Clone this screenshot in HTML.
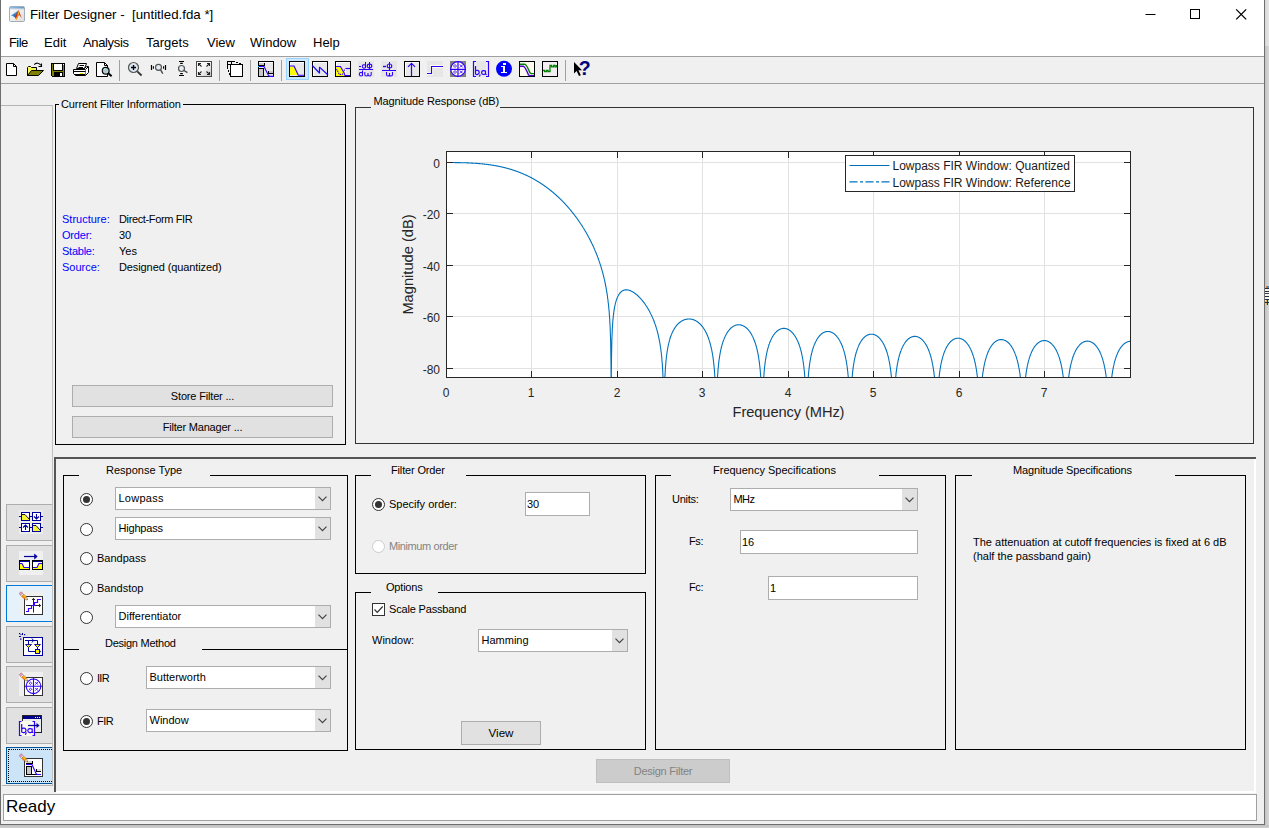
<!DOCTYPE html>
<html lang="en"><head><meta charset="utf-8"><title>Filter Designer</title>
<style>
html,body{margin:0;padding:0;}
body{width:1269px;height:828px;overflow:hidden;background:#f0f0f0;position:relative;
  font-family:"Liberation Sans",sans-serif;font-size:11px;color:#000;}
*{box-sizing:border-box;}
.abs,.a{position:absolute;}
.t{position:absolute;white-space:nowrap;line-height:13px;height:13px;}
.line{position:absolute;background:#000;}
#titlebar{position:absolute;left:1px;top:0;width:1263px;height:29px;background:#fff;}
#menubar{position:absolute;left:1px;top:29px;width:1263px;height:27px;background:#fff;}
.seg{font-family:"Liberation Sans",sans-serif;font-size:12px;position:absolute;white-space:nowrap;line-height:16px;}
.menu{font-family:"Liberation Sans",sans-serif;font-size:13px;position:absolute;white-space:nowrap;line-height:16px;top:35px;}
.grp{position:absolute;border:1px solid #000;}
.gt{position:absolute;background:#f0f0f0;white-space:nowrap;line-height:13px;height:13px;text-align:center;}
.combo{position:absolute;height:23px;background:#fff;border:1px solid #adadad;}
.combo span{position:absolute;left:2.5px;top:4px;line-height:13px;white-space:nowrap;}
.combo i{position:absolute;right:0;top:0;width:15px;height:21px;background:#e1e1e1;}
.combo i svg{position:absolute;left:2.5px;top:8px;}
.edit{position:absolute;height:24px;background:#fff;border:1px solid #adadad;}
.edit span{position:absolute;left:1px;top:5px;line-height:13px;}
.radio{position:absolute;width:13px;height:13px;border-radius:50%;border:1px solid #333;background:#fff;}
.radio.on::after{content:"";position:absolute;left:2px;top:2px;width:7px;height:7px;border-radius:50%;background:#333;}
.radio.dis{border-color:#ccc;}
.btn{position:absolute;background:#e1e1e1;border:1px solid #adadad;text-align:center;white-space:nowrap;}
.sb{position:absolute;left:6px;width:46px;height:37px;background:#e1e1e1;border:1px solid #c8c8c8;border-right:none;}
.sb svg{position:absolute;left:13px;top:6px;}
.tb{position:absolute;top:61px;width:16px;height:16px;}
.tsep{position:absolute;top:61px;width:1px;height:19px;background:#a0a0a0;}
svg text{font-family:"Liberation Sans",sans-serif;}

</style></head>
<body>
<!-- window chrome -->
<div class="a" style="left:0;top:0;width:1px;height:825px;background:#6e6e6e"></div>
<div class="a" style="left:1264px;top:0;width:1px;height:825px;background:#6e6e6e"></div>
<div class="a" style="left:0;top:824px;width:1265px;height:1px;background:#6e6e6e"></div>
<div class="a" style="left:1265px;top:0;width:4px;height:46px;background:linear-gradient(90deg,#d8d8d8,#e4e4e4)"></div>
<div class="a" style="left:1265px;top:46px;width:4px;height:782px;background:linear-gradient(90deg,#c4c4c4,#d6d6d6)"></div>
<div class="a" style="left:0;top:825px;width:1269px;height:3px;background:linear-gradient(180deg,#c0c0c0,#d0d0d0)"></div>
<svg class="a" style="left:1265px;top:285px" width="4" height="21" viewBox="0 0 4 21" shape-rendering="crispEdges">
  <rect x="0" y="3" width="4" height="13" fill="#f4f4f4"/>
  <rect x="0" y="3" width="4" height="1" fill="#2b2b3b"/><rect x="0" y="6" width="4" height="1" fill="#2b2b3b"/><rect x="0" y="8" width="4" height="1" fill="#3b3b4b"/>
  <rect x="0" y="11" width="4" height="1" fill="#2b2b3b"/><rect x="0" y="14" width="4" height="1" fill="#2b2b3b"/><rect x="0" y="17" width="4" height="1" fill="#2b2b3b"/>
  <rect x="1" y="1" width="1" height="2" fill="#c87840"/><rect x="2" y="1" width="2" height="2" fill="#3a8fd0"/>
  <rect x="1" y="15" width="1" height="2" fill="#e8b060"/><rect x="2" y="15" width="1" height="2" fill="#303080"/><rect x="3" y="15" width="1" height="2" fill="#a0e8e0"/>
  <rect x="1" y="18" width="1" height="2" fill="#e8b060"/><rect x="2" y="18" width="1" height="2" fill="#303080"/><rect x="3" y="18" width="1" height="2" fill="#a0e8e0"/>
</svg>
<div id="titlebar"></div>
<div id="menubar"></div>
<!--TITLE-->
<svg class="a" style="left:9px;top:6px" width="16" height="16" viewBox="9 6 16 16">
  <defs><linearGradient id="icb" x1="0" y1="0" x2="1" y2="1"><stop offset="0" stop-color="#fff"/><stop offset="1" stop-color="#dcdcdc"/></linearGradient>
  <linearGradient id="icw" x1="0" y1="0" x2="1" y2="0"><stop offset="0" stop-color="#8cc0ea"/><stop offset="1" stop-color="#5c9ad2"/></linearGradient></defs>
  <rect x="9.5" y="6.5" width="15" height="15" rx="1" fill="url(#icb)" stroke="#a4acb6"/>
  <rect x="10" y="7" width="14" height="1.6" fill="url(#icw)"/>
  <rect x="10" y="8.6" width="14" height="0.7" fill="#b9c4cf"/>
  <path d="M11 15.5 L16.9 11.6 L17.4 13 L15.2 17.6 L13.7 16.6 Z" fill="#4a8fd0"/>
  <path d="M13.7 16.6 L15.2 17.6 L16.2 15 L14 14 Z" fill="#2f6fb4"/>
  <path d="M15 17.4 L17.2 12 L18.3 10 L18.6 14 L16.4 19.7 Z" fill="#a82a1c"/>
  <path d="M18.3 10 C18.9 12 19 14 19.3 15.3 C18.4 15.8 17.6 17.5 16.9 19.2 L16.2 19.8 L15.7 18.9 C17 16 17.7 13 18.3 10 Z" fill="#f0841e"/>
  <path d="M18.3 10.2 L18.8 13.2 L18 14.6 Z" fill="#ffd020"/>
  <path d="M16.2 19.8 L15.6 18.8 L16.3 17.6 L16.9 19.2 Z" fill="#ffc020"/>
  <path d="M18.3 10 C19.4 11 20.3 15 21.9 17.9 C20.8 17.2 20 16 19.3 15.3 C19 13.5 18.9 12 18.3 10 Z" fill="#c8402c"/>
</svg>
<div class="seg" style="left:30px;top:7px;font-size:13.3px" id="ttl">Filter Designer -&nbsp; [untitled.fda *]</div>
<svg class="a" style="left:1140px;top:0" width="124" height="29" viewBox="0 0 124 29">
  <path d="M5.5 14.5 H15.5" stroke="#000" stroke-width="1" fill="none"/>
  <rect x="50.5" y="9.5" width="9" height="9" stroke="#000" stroke-width="1" fill="none"/>
  <path d="M96.2 9.4 L106.2 19.4 M106.2 9.4 L96.2 19.4" stroke="#000" stroke-width="1.3" fill="none"/>
</svg>
<!--MENU-->
<div class="menu" style="left:9px;letter-spacing:-0.6px">File</div>
<div class="menu" style="left:44px">Edit</div>
<div class="menu" style="left:83px;letter-spacing:-0.35px">Analysis</div>
<div class="menu" style="left:146px">Targets</div>
<div class="menu" style="left:207px">View</div>
<div class="menu" style="left:250px">Window</div>
<div class="menu" style="left:313px">Help</div>
<div class="a" style="left:1px;top:56px;width:1263px;height:1px;background:#a0a0a0"></div>
<div class="a" style="left:1px;top:83px;width:1263px;height:1px;background:#a0a0a0"></div>
<!--TOOLBAR-->
<div class="a" style="left:286px;top:58px;width:23px;height:22px;background:#cce8ff;border:1px solid #99d1ff"></div>
<svg class="a" style="left:0;top:57px" width="600" height="26" viewBox="0 57 600 26">
<g shape-rendering="crispEdges" fill="#a0a0a0">
  <rect x="119" y="60" width="1" height="21"/><rect x="219" y="60" width="1" height="21"/>
  <rect x="250" y="60" width="1" height="21"/><rect x="281" y="60" width="1" height="21"/>
  <rect x="565" y="60" width="1" height="21"/>
</g>
<!-- new -->
<path d="M6.5 63.5 H13.5 L16.5 66.5 V75.5 H6.5 Z" fill="#fff" stroke="#000"/>
<path d="M13.5 63.5 V66.5 H16.5" fill="none" stroke="#000"/>
<!-- open -->
<g>
  <path d="M27.5 75.5 V67.5 L28.5 66.5 H30.5 L31.5 67.5 H36.5 V70.5" fill="#ffff80" stroke="#000"/>
  <path d="M28 68 H36 V70.5 H31 L28 74.5 Z" fill="#f6f650" stroke="none"/>
  <path d="M27.5 75.5 L31.5 70.5 H43.5 L38.5 75.5 Z" fill="#808000" stroke="#000" stroke-linejoin="miter"/>
  <path d="M34.3 64.6 C35.8 62.7 39.3 62.6 40.8 65.3" fill="none" stroke="#000" stroke-width="1.2"/>
  <path d="M38.5 66.5 H41.5 V63.5" fill="none" stroke="#000" stroke-width="1.1"/>
</g>
<!-- save -->
<g shape-rendering="crispEdges">
  <rect x="51" y="63" width="14" height="14" fill="#000"/>
  <rect x="52" y="64" width="12" height="12" fill="#808000"/>
  <rect x="54" y="64" width="8" height="6" fill="#fff"/>
  <rect x="54" y="63" width="8" height="1" fill="#000"/>
  <rect x="53" y="64" width="1" height="7" fill="#000"/><rect x="62" y="64" width="1" height="7" fill="#000"/>
  <rect x="54" y="70" width="8" height="1" fill="#000"/>
  <rect x="54" y="72" width="9" height="5" fill="#000"/>
  <rect x="60" y="73" width="2" height="3" fill="#fff"/>
  <rect x="63" y="64" width="1" height="1" fill="#fff"/>
  <rect x="51" y="76" width="1" height="1" fill="#f0f0f0"/>
</g>
<!-- print -->
<g fill="none" stroke="#000">
  <path d="M76.5 68.5 L78.5 63.5 H86.5 L84.5 68.5 Z" fill="#fff"/>
  <path d="M79.5 65.5 H84 M78.5 67.5 H83"/>
  <path d="M73.5 69.5 H85.5 V75.5 H75.5 L73.5 73.5 Z" fill="#fff"/>
  <path d="M85.5 69.5 L88.5 66.5 V72.5 L85.5 75.5" fill="#fff"/>
  <path d="M84.5 68.5 L86.5 66.5 H88"/>
  <path d="M73.5 71.5 H85.5 M74.5 74.5 H85"/>
  <path d="M80 73.5 H83" stroke="#e8e800"/>
</g>
<!-- preview -->
<g>
  <path d="M96.5 62.5 H104.5 L107.5 65.5 V76.5 H96.5 Z" fill="#fff" stroke="#000"/>
  <path d="M104.5 62.5 V65.5 H107.5" fill="none" stroke="#000"/>
  <circle cx="105.7" cy="70.7" r="3.4" fill="#b9c4c8" stroke="#000" stroke-width="1.2"/>
  <path d="M104 69.2 L105.2 68.4 M106.6 72.6 L107.6 71.6" stroke="#7fffff" stroke-width="1.2"/>
  <path d="M108.3 73.3 L111.6 76.3" stroke="#000" stroke-width="2"/>
</g>
<!-- zoom in -->
<g>
  <circle cx="133.5" cy="67.5" r="5" fill="#dbe6f1" stroke="#555" stroke-width="1.2"/>
  <path d="M131 67.5 H136 M133.5 65 V70" stroke="#000" stroke-width="1.3"/>
  <path d="M137.2 71.3 L141.6 75.5" stroke="#333" stroke-width="1.8"/>
</g>
<!-- zoom x -->
<g>
  <path d="M151.5 65 V70 M165.5 65 V70" stroke="#000" stroke-width="1.2"/>
  <path d="M153.4 66.2 V68.8 M163.6 66.2 V68.8" stroke="#000" stroke-width="1.1"/>
  <circle cx="158.5" cy="67.3" r="3" fill="#e3ebf3" stroke="#555" stroke-width="1.2"/>
  <path d="M160.6 69.8 L162.8 73.6" stroke="#444" stroke-width="1.3"/>
</g>
<!-- zoom y -->
<g>
  <path d="M179 61.5 H184 M179 75.5 H184" stroke="#000" stroke-width="1.2"/>
  <path d="M180.2 63.4 H182.8 M180.2 73.6 H182.8" stroke="#000" stroke-width="1.1"/>
  <circle cx="181.5" cy="68.5" r="3" fill="#e3ebf3" stroke="#555" stroke-width="1.2"/>
  <path d="M184 70.5 L187.4 72.6" stroke="#444" stroke-width="1.3"/>
</g>
<!-- full view -->
<g>
  <defs><linearGradient id="fvg" x1="0" y1="0" x2="1" y2="1"><stop offset="0" stop-color="#fff"/><stop offset="0.5" stop-color="#f4f4f4"/><stop offset="1" stop-color="#c4c4c4"/></linearGradient></defs>
  <rect x="196.5" y="61.5" width="15" height="15" fill="url(#fvg)" stroke="#4a4a4a"/>
  <g stroke="#222" stroke-width="1.1" fill="none">
    <path d="M198.5 66 V63.5 H201 M198.8 63.8 L201.5 66.5"/>
    <path d="M207 63.5 H209.5 V66 M209.2 63.8 L206.5 66.5"/>
    <path d="M198.5 72 V74.5 H201 M198.8 74.2 L201.5 71.5"/>
    <path d="M207 74.5 H209.5 V72 M209.2 74.2 L206.5 71.5"/>
  </g>
</g>
<!-- undock -->
<g shape-rendering="crispEdges">
  <rect x="227" y="61" width="8" height="1" fill="#000"/><rect x="227" y="61" width="1" height="8" fill="#000"/>
  <rect x="227" y="64" width="4" height="1" fill="#000"/><rect x="231" y="61" width="1" height="4" fill="#000"/>
  <rect x="236" y="62" width="2" height="1" fill="#000"/><rect x="239" y="63" width="2" height="1" fill="#000"/>
  <rect x="228" y="70" width="1" height="2" fill="#000"/><rect x="229" y="73" width="1" height="2" fill="#000"/>
  <rect x="230" y="64" width="13" height="13" fill="#000"/><rect x="231" y="65" width="11" height="11" fill="#fff"/>
</g>
<!-- spec icon -->
<g shape-rendering="crispEdges">
  <rect x="258" y="61" width="16" height="16" fill="#000"/><rect x="259" y="62" width="14" height="14" fill="#fff"/>
  <rect x="260" y="63" width="13" height="13" fill="#e8e8e8"/>
  <rect x="259" y="63" width="5" height="2" fill="#c8c8c8"/><rect x="264" y="63" width="1" height="3" fill="#000"/><rect x="259" y="65" width="6" height="1" fill="#000"/>
  <rect x="259" y="68" width="5" height="1" fill="#000"/><rect x="263" y="68" width="1" height="8" fill="#000"/><rect x="259" y="69" width="4" height="7" fill="#c8c8c8"/>
  <rect x="268" y="71" width="1" height="3" fill="#000"/><rect x="268" y="73" width="5" height="1" fill="#000"/><rect x="269" y="71" width="4" height="2" fill="#c8c8c8"/>
  <rect x="258" y="66" width="1" height="1" fill="#00c0ff"/>
</g>
<path d="M259 66.5 H264 L268.5 75.5 L269.5 76.3 H274" fill="none" stroke="#3000ff" stroke-width="1.15"/>
<!-- magnitude icon (selected) -->
<g shape-rendering="crispEdges">
  <rect x="289" y="61" width="16" height="16" fill="#000"/><rect x="290" y="62" width="14" height="14" fill="#fff"/>
  <rect x="291" y="63" width="13" height="13" fill="#e8e8e8"/>
</g>
<path d="M290 66.5 H294 L298 75 H290 Z" fill="#ffff00"/>
<path d="M290 66 H294 L298.3 75.2 H304" fill="none" stroke="#3000ff" stroke-width="1.15"/>
<!-- phase icon -->
<g shape-rendering="crispEdges">
  <rect x="312" y="61" width="16" height="16" fill="#000"/><rect x="313" y="62" width="14" height="14" fill="#fff"/>
  <rect x="314" y="63" width="13" height="13" fill="#e8e8e8"/>
</g>
<path d="M312.3 65.5 L319.5 73 V67.2 L328 75" fill="none" stroke="#1a00ff" stroke-width="1.15" stroke-linejoin="round"/>
<!-- mag+phase icon -->
<g shape-rendering="crispEdges">
  <rect x="335" y="61" width="16" height="16" fill="#000"/><rect x="336" y="62" width="14" height="14" fill="#fff"/>
  <rect x="337" y="63" width="13" height="13" fill="#e8e8e8"/>
</g>
<path d="M336 67 H340.3 L343.6 72.8 L344.4 76 H336 Z" fill="#ffff00"/>
<path d="M336 66.5 H340.4 L343.9 72.4 L345 75.5 H350" fill="none" stroke="#3000ff" stroke-width="1.15"/>
<path d="M336.5 69 L338.7 73.2 L339.8 74.4 H342.2 L343.4 72.8" fill="none" stroke="#3000ff" stroke-width="1.1" stroke-dasharray="1.3 0.8"/>
<path d="M345.4 68.5 H350" fill="none" stroke="#3000ff" stroke-width="1.15"/>
<rect x="344" y="69.5" width="1" height="1.2" fill="#3000ff"/>
<rect x="345" y="69.3" width="1" height="5" fill="#fff"/>
<!-- group delay -->
<rect x="358" y="61" width="16" height="16" fill="#e6e6e6" shape-rendering="crispEdges"/>
<g fill="none" stroke="#3000ff" stroke-width="1.05">
  <path d="M359 66.5 H361"/>
  <path d="M365.5 62 V68 M365.5 65.3 C364 64 362.3 65 362.3 66.5 C362.3 68 364 68.8 365.5 67.5"/>
  <path d="M369.5 62 V69"/><ellipse cx="369.5" cy="66" rx="2.3" ry="1.9"/>
  <path d="M359 69.5 H373"/>
  <path d="M362.5 70.5 V76 M362.5 73 C361 71.8 359.3 72.6 359.3 74.2 C359.3 75.8 361 76.5 362.5 75.3"/>
  <path d="M364.8 72 V74.5 C364.8 76.5 368 76.5 368 74.5 V73 M368 74.5 C368 76.5 371.2 76.5 371.2 74.5 V72"/>
</g>
<!-- phase delay -->
<rect x="381" y="61" width="16" height="16" fill="#e6e6e6" shape-rendering="crispEdges"/>
<g fill="none" stroke="#3000ff" stroke-width="1.05">
  <path d="M383 66.5 H386" stroke-width="1.4"/>
  <path d="M389.5 62 V70"/><ellipse cx="389.5" cy="66" rx="2.3" ry="2"/>
  <path d="M382 70.5 H396"/>
  <path d="M386.5 72 V74.5 C386.5 76.5 389.5 76.5 389.5 74.5 V73 M389.5 74.5 C389.5 76.5 392.5 76.5 392.5 74.5 V72"/>
</g>
<!-- impulse -->
<g shape-rendering="crispEdges">
  <rect x="404" y="61" width="16" height="16" fill="#000"/><rect x="405" y="62" width="14" height="14" fill="#fff"/>
  <rect x="406" y="63" width="13" height="13" fill="#e8e8e8"/>
</g>
<path d="M411.5 76 V63.5 M408 66.8 L411.5 63.3 L415 66.8" fill="none" stroke="#3000ff" stroke-width="1.2"/>
<!-- step -->
<rect x="427" y="61" width="16" height="16" fill="#e6e6e6" shape-rendering="crispEdges"/>
<path d="M427 73.5 H431.5 V66.5 H443" fill="none" stroke="#fffff0" stroke-width="3"/>
<path d="M427 73.5 H431.5 V66.5 H443" fill="none" stroke="#3000ff" stroke-width="1.2"/>
<!-- pole zero -->
<rect x="450" y="61" width="16" height="16" fill="#808080" shape-rendering="crispEdges"/>
<circle cx="458" cy="69" r="7.3" fill="#ffffe6" stroke="#3000ff" stroke-width="1.2"/>
<path d="M458 61 V77 M450 69.3 H466" stroke="#3000ff" stroke-width="1.2"/>
<g fill="none" stroke="#3000ff" stroke-width="0.9">
  <path d="M455 64.5 L456.5 66 L455 67.5 L453.5 66 Z M455 70.5 L456.5 72 L455 73.5 L453.5 72 Z"/>
  <path d="M459.8 64.5 L462.8 67.5 M462.8 64.5 L459.8 67.5 M459.8 70.5 L462.8 73.5 M462.8 70.5 L459.8 73.5"/>
</g>
<!-- [b,a] -->
<rect x="476" y="61" width="10" height="16" fill="#e6e6e6" shape-rendering="crispEdges"/>
<g fill="none" stroke="#3000ff" stroke-width="1.2">
  <path d="M476 61.5 H473.5 V76.5 H476 M486 61.5 H488.5 V76.5 H486"/>
  <path d="M475.5 66 V74.5 M475.5 71 C476.5 69.8 479.2 70 479.2 72.3 C479.2 74.8 476.5 75 475.5 73.8"/>
  <path d="M480.3 74.5 L479.3 76.5"/>
  <path d="M485.5 70.5 V74.7 M485.5 71.5 C484.3 70 481.6 70.3 481.6 72.5 C481.6 74.8 484.3 75 485.5 73.6 L486.5 75"/>
</g>
<!-- info -->
<circle cx="504" cy="68.8" r="8" fill="#0000ff"/>
<g shape-rendering="crispEdges" fill="#fff">
  <rect x="503" y="63" width="3" height="2"/><rect x="501" y="66" width="4" height="1"/><rect x="503" y="66" width="2" height="7"/><rect x="501" y="72" width="6" height="1"/>
</g>
<!-- mag est -->
<g shape-rendering="crispEdges">
  <rect x="519" y="61" width="16" height="16" fill="#000"/><rect x="520" y="62" width="14" height="14" fill="#fffbf0"/>
</g>
<path d="M520 66.3 H523.5 C525.5 67 526.5 71 528.5 74.8 L529.5 75.6 H534" fill="none" stroke="#4400cc" stroke-width="1.4"/>
<path d="M520 64.3 H525 C527 65 528 69 530 72.8 L531 73.6 H534" fill="none" stroke="#008000" stroke-width="1.4"/>
<!-- roundoff noise -->
<g shape-rendering="crispEdges">
  <rect x="542" y="61" width="16" height="16" fill="#000"/><rect x="543" y="62" width="14" height="14" fill="#f4eef4"/>
</g>
<path d="M543 70.3 H544.5 V71.5 H546.5 V70.3 H548 V71.5 H550 V65.3 H551.5 V66.8 H553.5 V65.3 H555 V66.8 H556.5 V65" fill="none" stroke="#008000" stroke-width="1.3"/>
<!-- help -->
<path d="M574 62 V73.5 L576.6 71 L579 76 L580.8 75.2 L578.5 70.3 H582 Z" fill="#000"/>
<text x="578.8" y="75.3" font-size="19.5" font-weight="bold" fill="#000080" style="font-family:'Liberation Sans',sans-serif">?</text>
</svg>

<!--SIDEBAR-->
<div class="a" style="left:1px;top:105px;width:52px;height:1px;background:#b4b4b4"></div>
<div class="a" style="left:52px;top:105px;width:1px;height:681px;background:#c0c0c0"></div>
<div class="a" style="left:2px;top:785px;width:51px;height:1px;background:#b4b4b4"></div>
<div class="a" style="left:6px;top:504px;width:46px;height:37px;background:#e1e1e1;border:1px solid #adadad;border-right:none"></div>
<div class="a" style="left:6px;top:545px;width:46px;height:37px;background:#e1e1e1;border:1px solid #adadad;border-right:none"></div>
<div class="a" style="left:6px;top:585px;width:46px;height:37px;background:#e5f1fb;border:1px solid #0078d7;border-right:none"></div>
<div class="a" style="left:6px;top:626px;width:46px;height:37px;background:#e1e1e1;border:1px solid #adadad;border-right:none"></div>
<div class="a" style="left:6px;top:666px;width:46px;height:37px;background:#e1e1e1;border:1px solid #adadad;border-right:none"></div>
<div class="a" style="left:6px;top:707px;width:46px;height:37px;background:#e1e1e1;border:1px solid #adadad;border-right:none"></div>
<div class="a" style="left:6px;top:747px;width:46px;height:37px;background:#cce4f7;border:1px solid #005499;border-right:none"></div>
<div class="a" style="left:8px;top:749px;width:44px;height:33px;border:1px dotted #000;border-right:none"></div>
<svg class="a" style="left:0;top:500px" width="53" height="290" viewBox="0 500 53 290">
<defs><linearGradient id="pg" x1="0" y1="0" x2="0" y2="1"><stop offset="0" stop-color="#ffe060"/><stop offset="0.45" stop-color="#ffb000"/><stop offset="1" stop-color="#f07800"/></linearGradient></defs>
<rect x="19" y="510" width="24" height="24" fill="#ececec" shape-rendering="crispEdges"/>
<g shape-rendering="crispEdges"><rect x="21" y="512" width="9" height="9" fill="#0000a0"/><rect x="22" y="513" width="7" height="7" fill="#fff"/></g>
<path d="M22 515 H25 L29 519 V520 H22 Z" fill="#f6f630"/>
<path d="M22 514.5 H25 L29 519" fill="none" stroke="#000" stroke-width="0.9"/>
<g shape-rendering="crispEdges"><rect x="32" y="512" width="9" height="9" fill="#0000a0"/><rect x="33" y="513" width="7" height="7" fill="#fff"/></g>
<path d="M36.5 514 V519 M34 516.5 L36.5 519.0 L39 516.5" fill="none" stroke="#0000a0" stroke-width="1.1"/>
<g shape-rendering="crispEdges"><rect x="21" y="523" width="9" height="9" fill="#0000a0"/><rect x="22" y="524" width="7" height="7" fill="#fff"/></g>
<path d="M25.5 530 V525 M23 527.5 L25.5 525.0 L28 527.5" fill="none" stroke="#0000a0" stroke-width="1.1"/>
<g shape-rendering="crispEdges"><rect x="32" y="523" width="9" height="9" fill="#0000a0"/><rect x="33" y="524" width="7" height="7" fill="#fff"/></g>
<path d="M33 526 H36 L40 530 V531 H33 Z" fill="#f6f630"/>
<path d="M33 525.5 H36 L40 530" fill="none" stroke="#000" stroke-width="0.9"/>
<g shape-rendering="crispEdges" fill="#0000a0"><rect x="19" y="516" width="2" height="1"/><rect x="30" y="516" width="2" height="1"/><rect x="41" y="516" width="2" height="1"/><rect x="19" y="527" width="2" height="1"/><rect x="30" y="527" width="2" height="1"/><rect x="41" y="527" width="2" height="1"/></g>
<rect x="19" y="551" width="24" height="24" fill="#f0f0f0" shape-rendering="crispEdges"/>
<path d="M24 556.5 H36" stroke="#0000a0" stroke-width="1.2"/><path d="M34.5 554 L37.3 556.5 L34.5 559 Z" fill="#0000a0" stroke="#0000a0" stroke-width="0.6"/>
<g shape-rendering="crispEdges"><rect x="19" y="560" width="11" height="10" fill="#000"/><rect x="20" y="561" width="9" height="8" fill="#fff"/><rect x="20" y="561" width="9" height="1" fill="#0000a0"/></g>
<path d="M20 563.5 H22 L24 567.5 H29 V569 H20 Z" fill="#ffff00"/>
<path d="M20 563.5 H22 L24 567.5 H29" fill="none" stroke="#3000ff" stroke-width="1.1"/>
<g shape-rendering="crispEdges"><rect x="32" y="560" width="11" height="10" fill="#000"/><rect x="33" y="561" width="9" height="8" fill="#fff"/><rect x="33" y="561" width="9" height="1" fill="#0000a0"/></g>
<path d="M33 567.5 H37 L39 563.5 H42 V569 H33 Z" fill="#ffff00"/>
<path d="M33 567.5 H37 L39 563.5 H42" fill="none" stroke="#3000ff" stroke-width="1.1"/>
<rect x="19" y="591" width="24" height="24" fill="#f0f0f0" shape-rendering="crispEdges"/>
<rect x="24.5" y="596.5" width="18" height="18" fill="#fff" stroke="#333"/>
<path d="M33.5 612.5 V598.5 M26 605.5 H40.5" stroke="#222" stroke-width="1" fill="none"/>
<path d="M32 600 L33.5 598.3 L35 600 M39 604 L40.7 605.5 L39 607" stroke="#222" stroke-width="1" fill="none"/>
<path d="M26 611.5 H28.5 V608.5 H31.5 V605.5 H34.5 V602.5 H37.5 V599.5 H41" stroke="#4400ff" stroke-width="1.2" fill="none"/>
<g transform="translate(20.3,592.8) rotate(45)"><rect x="-0.3" y="-1.5" width="2.5" height="3" rx="1" fill="#eaa0c4" stroke="#a84868" stroke-width="0.5"/><rect x="2.1" y="-1.5" width="1.4" height="3" fill="#ececec" stroke="#8a8a8a" stroke-width="0.4"/><rect x="3.5" y="-1.5" width="3.8" height="3" fill="url(#pg)" stroke="#b84800" stroke-width="0.45"/><path d="M7.3 -1.5 L9.4 -0.9 L10 0 L9.4 0.9 L7.3 1.5 Z" fill="#f8d4a8" stroke="#8a5a30" stroke-width="0.4"/><path d="M9.2 -0.6 L10.3 0 L9.2 0.6 Z" fill="#222"/></g>
<g fill="#0000a0"><rect x="19" y="633" width="1.2" height="1.2"/><rect x="22" y="633" width="1" height="2"/><rect x="24" y="634" width="1.2" height="1.2"/><rect x="19" y="636" width="2" height="1"/><rect x="20" y="638.5" width="1.5" height="1.2"/><rect x="20.5" y="634" width="1" height="1"/></g>
<rect x="23.5" y="637.5" width="19" height="18" fill="#fff" stroke="#0000a0" stroke-width="1"/>
<g fill="none" stroke="#0000a0" stroke-width="1"><path d="M25 640.5 H37.5 V644 M28.5 640.5 V651.5 H35 M32 638.5 L33.5 640.5 L32 642.5 M37.5 646 V649"/></g>
<path d="M25.5 644.5 H31.5 L28.5 647.5 Z M34.5 644.5 H40.5 L37.5 647.5 Z" fill="#ffee00" stroke="#0000a0" stroke-width="0.9"/>
<rect x="35.5" y="649.5" width="4" height="4" fill="#ffee00" stroke="#0000a0"/><path d="M39.5 650 L41 651.5 L39.5 653" fill="#0000a0"/>
<rect x="19" y="672" width="24" height="24" fill="#f0f0f0" shape-rendering="crispEdges"/>
<rect x="24.5" y="677.5" width="18" height="18" fill="#fff" stroke="#333"/>
<circle cx="33.5" cy="686.3" r="7.3" fill="none" stroke="#3000ff" stroke-width="1.1"/>
<path d="M33.5 678 V695 M25 686.3 H42" stroke="#3000ff" stroke-width="1.1"/>
<g fill="none" stroke="#3000ff" stroke-width="0.9"><path d="M30.5 682 L31.8 683.3 L30.5 684.6 L29.2 683.3 Z M30.5 688 L31.8 689.3 L30.5 690.6 L29.2 689.3 Z"/><path d="M35.3 682 L37.9 684.6 M37.9 682 L35.3 684.6 M35.3 688 L37.9 690.6 M37.9 688 L35.3 690.6"/></g>
<g transform="translate(20.3,673.8) rotate(45)"><rect x="-0.3" y="-1.5" width="2.5" height="3" rx="1" fill="#eaa0c4" stroke="#a84868" stroke-width="0.5"/><rect x="2.1" y="-1.5" width="1.4" height="3" fill="#ececec" stroke="#8a8a8a" stroke-width="0.4"/><rect x="3.5" y="-1.5" width="3.8" height="3" fill="url(#pg)" stroke="#b84800" stroke-width="0.45"/><path d="M7.3 -1.5 L9.4 -0.9 L10 0 L9.4 0.9 L7.3 1.5 Z" fill="#f8d4a8" stroke="#8a5a30" stroke-width="0.4"/><path d="M9.2 -0.6 L10.3 0 L9.2 0.6 Z" fill="#222"/></g>
<rect x="22.5" y="715.5" width="19" height="17" fill="#ececec" stroke="#222"/>
<rect x="23" y="716" width="18" height="3" fill="#00008b" shape-rendering="crispEdges"/>
<g fill="#fff" shape-rendering="crispEdges"><rect x="35" y="717" width="1" height="1"/><rect x="37" y="717" width="1" height="1"/><rect x="39" y="717" width="1" height="1"/></g>
<rect x="20" y="721" width="14" height="15" fill="#fbfbea"/>
<g fill="none" stroke="#3000ff" stroke-width="1.2"><path d="M21.5 721.5 H19.5 V735.5 H21.5 M32.5 721.5 H34.5 V735.5 H32.5"/><path d="M21.7 724 V732.5 M21.7 729 C23 727.6 26 727.8 26 730.3 C26 733 23 733.2 21.7 731.8"/><path d="M26.5 732.5 L25.3 734.8"/><path d="M32.2 728.5 V732.7 M32.2 729.5 C31 728 27.8 728.3 27.8 730.5 C27.8 733 31 733.2 32.2 731.6 L33 733"/></g>
<path d="M28 725.5 H37" stroke="#0000a0" stroke-width="1.2"/><path d="M36.5 723 L39.6 725.5 L36.5 728 Z" fill="#0000a0"/>
<rect x="24.5" y="758.5" width="18" height="18" fill="#fff" stroke="#333"/>
<g shape-rendering="crispEdges"><rect x="27" y="761" width="5" height="2" fill="#d0d0d0"/><rect x="32" y="761" width="1" height="3" fill="#000"/><rect x="26" y="763" width="7" height="1" fill="#000"/><rect x="26" y="766" width="6" height="1" fill="#000"/><rect x="26" y="766" width="1" height="9" fill="#000"/><rect x="27" y="767" width="4" height="7" fill="#c8c8c8"/><rect x="31" y="766" width="1" height="9" fill="#000"/><rect x="26" y="774" width="11" height="1" fill="#000"/><rect x="36" y="769" width="1" height="3" fill="#000"/><rect x="36" y="771" width="5" height="1" fill="#000"/><rect x="37" y="769" width="4" height="2" fill="#d8d8d8"/></g>
<path d="M26 764.5 H32 L36 773.5 L37 774.5 H41" fill="none" stroke="#3000ff" stroke-width="1.2"/>
<g transform="translate(20.3,754.8) rotate(45)"><rect x="-0.3" y="-1.5" width="2.5" height="3" rx="1" fill="#eaa0c4" stroke="#a84868" stroke-width="0.5"/><rect x="2.1" y="-1.5" width="1.4" height="3" fill="#ececec" stroke="#8a8a8a" stroke-width="0.4"/><rect x="3.5" y="-1.5" width="3.8" height="3" fill="url(#pg)" stroke="#b84800" stroke-width="0.45"/><path d="M7.3 -1.5 L9.4 -0.9 L10 0 L9.4 0.9 L7.3 1.5 Z" fill="#f8d4a8" stroke="#8a5a30" stroke-width="0.4"/><path d="M9.2 -0.6 L10.3 0 L9.2 0.6 Z" fill="#222"/></g>
</svg>
<!--PANELS-->
<!-- Current Filter Information -->
<div class="grp" style="left:55px;top:104px;width:291px;height:341px"></div>
<div class="gt" style="left:59px;top:98px;width:124px;text-align:left;padding-left:2px;letter-spacing:-0.1px">Current Filter Information</div>
<div class="t" style="left:62px;top:213px;color:#0000ff">Structure:</div>
<div class="t" style="left:62px;top:229px;color:#0000ff;letter-spacing:-0.2px">Order:</div>
<div class="t" style="left:62px;top:245px;color:#0000ff;letter-spacing:-0.25px">Stable:</div>
<div class="t" style="left:62px;top:261px;color:#0000ff">Source:</div>
<div class="t" style="left:119px;top:213px;letter-spacing:-0.37px">Direct-Form FIR</div>
<div class="t" style="left:119px;top:229px">30</div>
<div class="t" style="left:119px;top:245px">Yes</div>
<div class="t" style="left:119px;top:261px;letter-spacing:-0.1px">Designed (quantized)</div>
<div class="btn" style="left:72px;top:385px;width:261px;height:22px;line-height:20px;letter-spacing:-0.17px">Store Filter ...</div>
<div class="btn" style="left:72px;top:416px;width:261px;height:22px;line-height:20px;letter-spacing:-0.2px">Filter Manager ...</div>
<!-- Magnitude Response panel -->
<div class="grp" style="left:355px;top:107px;width:899px;height:337px;border-color:#333"></div>
<div class="gt" style="left:371px;top:95px;width:129px;text-align:left;padding-left:2.5px;letter-spacing:-0.1px">Magnitude Response (dB)</div>

<!--PLOT-->
<svg class="a" style="left:356px;top:108px" width="897" height="335" viewBox="356 108 897 335">
  <rect x="446" y="151" width="685" height="227" fill="#fff"/>
  <g shape-rendering="crispEdges" stroke="#e2e2e2" stroke-width="1" fill="none">
    <path d="M531.5 152 V377"/><path d="M617.5 152 V377"/><path d="M702.5 152 V377"/><path d="M788.5 152 V377"/><path d="M873.5 152 V377"/><path d="M959.5 152 V377"/><path d="M1044.5 152 V377"/><path d="M447 162.5 H1130"/><path d="M447 213.5 H1130"/><path d="M447 265.5 H1130"/><path d="M447 316.5 H1130"/><path d="M447 368.5 H1130"/>
  </g>
  <clipPath id="axclip"><rect x="446" y="151" width="685" height="227"/></clipPath>
  <path d="M446.5,162.5 L446.7,162.5 L446.8,162.5 L447.0,162.5 L447.2,162.5 L447.3,162.5 L447.5,162.5 L447.7,162.5 L447.8,162.5 L448.0,162.5 L448.2,162.5 L448.3,162.5 L448.5,162.5 L448.7,162.5 L448.8,162.5 L449.0,162.5 L449.2,162.5 L449.3,162.5 L449.5,162.5 L449.7,162.5 L449.8,162.5 L450.0,162.5 L450.2,162.5 L450.3,162.5 L450.5,162.5 L450.7,162.5 L450.8,162.5 L451.0,162.5 L451.2,162.5 L451.3,162.5 L451.5,162.5 L451.7,162.5 L451.8,162.5 L452.0,162.5 L452.2,162.5 L452.3,162.5 L452.5,162.5 L452.7,162.5 L452.8,162.5 L453.0,162.5 L453.2,162.5 L453.3,162.5 L453.5,162.5 L453.7,162.5 L453.8,162.5 L454.0,162.5 L454.2,162.5 L454.3,162.5 L454.5,162.5 L454.7,162.6 L454.8,162.6 L455.0,162.6 L455.2,162.6 L455.4,162.6 L455.5,162.6 L455.7,162.6 L455.9,162.6 L456.0,162.6 L456.2,162.6 L456.4,162.6 L456.5,162.6 L456.7,162.6 L456.9,162.6 L457.0,162.6 L457.2,162.6 L457.4,162.6 L457.5,162.6 L457.7,162.6 L457.9,162.6 L458.0,162.6 L458.2,162.6 L458.4,162.6 L458.5,162.6 L458.7,162.6 L458.9,162.6 L459.0,162.6 L459.2,162.6 L459.4,162.6 L459.5,162.6 L459.7,162.6 L459.9,162.6 L460.0,162.6 L460.2,162.6 L460.4,162.7 L460.5,162.7 L460.7,162.7 L460.9,162.7 L461.0,162.7 L461.2,162.7 L461.4,162.7 L461.5,162.7 L461.7,162.7 L461.9,162.7 L462.0,162.7 L462.2,162.7 L462.4,162.7 L462.5,162.7 L462.7,162.7 L462.9,162.7 L463.0,162.7 L463.2,162.7 L463.4,162.7 L463.5,162.7 L463.7,162.7 L463.9,162.8 L464.0,162.8 L464.2,162.8 L464.4,162.8 L464.5,162.8 L464.7,162.8 L464.9,162.8 L465.0,162.8 L465.2,162.8 L465.4,162.8 L465.5,162.8 L465.7,162.8 L465.9,162.8 L466.0,162.8 L466.2,162.8 L466.4,162.8 L466.5,162.8 L466.7,162.9 L466.9,162.9 L467.0,162.9 L467.2,162.9 L467.4,162.9 L467.5,162.9 L467.7,162.9 L467.9,162.9 L468.0,162.9 L468.2,162.9 L468.4,162.9 L468.5,162.9 L468.7,162.9 L468.9,162.9 L469.0,163.0 L469.2,163.0 L469.4,163.0 L469.5,163.0 L469.7,163.0 L469.9,163.0 L470.0,163.0 L470.2,163.0 L470.4,163.0 L470.5,163.0 L470.7,163.0 L470.9,163.0 L471.0,163.0 L471.2,163.1 L471.4,163.1 L471.5,163.1 L471.7,163.1 L471.9,163.1 L472.0,163.1 L472.2,163.1 L472.4,163.1 L472.6,163.1 L472.7,163.1 L472.9,163.2 L473.1,163.2 L473.2,163.2 L473.4,163.2 L473.6,163.2 L473.7,163.2 L473.9,163.2 L474.1,163.2 L474.2,163.2 L474.4,163.2 L474.6,163.3 L474.7,163.3 L474.9,163.3 L475.1,163.3 L475.2,163.3 L475.4,163.3 L475.6,163.3 L475.7,163.3 L475.9,163.3 L476.1,163.4 L476.2,163.4 L476.4,163.4 L476.6,163.4 L476.7,163.4 L476.9,163.4 L477.1,163.4 L477.2,163.4 L477.4,163.5 L477.6,163.5 L477.7,163.5 L477.9,163.5 L478.1,163.5 L478.2,163.5 L478.4,163.5 L478.6,163.5 L478.7,163.6 L478.9,163.6 L479.1,163.6 L479.2,163.6 L479.4,163.6 L479.6,163.6 L479.7,163.6 L479.9,163.7 L480.1,163.7 L480.2,163.7 L480.4,163.7 L480.6,163.7 L480.7,163.7 L480.9,163.8 L481.1,163.8 L481.2,163.8 L481.4,163.8 L481.6,163.8 L481.7,163.8 L481.9,163.8 L482.1,163.9 L482.2,163.9 L482.4,163.9 L482.6,163.9 L482.7,163.9 L482.9,163.9 L483.1,164.0 L483.2,164.0 L483.4,164.0 L483.6,164.0 L483.7,164.0 L483.9,164.1 L484.1,164.1 L484.2,164.1 L484.4,164.1 L484.6,164.1 L484.7,164.1 L484.9,164.2 L485.1,164.2 L485.2,164.2 L485.4,164.2 L485.6,164.2 L485.7,164.3 L485.9,164.3 L486.1,164.3 L486.2,164.3 L486.4,164.3 L486.6,164.4 L486.7,164.4 L486.9,164.4 L487.1,164.4 L487.2,164.4 L487.4,164.5 L487.6,164.5 L487.7,164.5 L487.9,164.5 L488.1,164.6 L488.2,164.6 L488.4,164.6 L488.6,164.6 L488.7,164.6 L488.9,164.7 L489.1,164.7 L489.2,164.7 L489.4,164.7 L489.6,164.8 L489.8,164.8 L489.9,164.8 L490.1,164.8 L490.3,164.9 L490.4,164.9 L490.6,164.9 L490.8,164.9 L490.9,164.9 L491.1,165.0 L491.3,165.0 L491.4,165.0 L491.6,165.0 L491.8,165.1 L491.9,165.1 L492.1,165.1 L492.3,165.2 L492.4,165.2 L492.6,165.2 L492.8,165.2 L492.9,165.3 L493.1,165.3 L493.3,165.3 L493.4,165.3 L493.6,165.4 L493.8,165.4 L493.9,165.4 L494.1,165.5 L494.3,165.5 L494.4,165.5 L494.6,165.5 L494.8,165.6 L494.9,165.6 L495.1,165.6 L495.3,165.7 L495.4,165.7 L495.6,165.7 L495.8,165.7 L495.9,165.8 L496.1,165.8 L496.3,165.8 L496.4,165.9 L496.6,165.9 L496.8,165.9 L496.9,166.0 L497.1,166.0 L497.3,166.0 L497.4,166.1 L497.6,166.1 L497.8,166.1 L497.9,166.2 L498.1,166.2 L498.3,166.2 L498.4,166.3 L498.6,166.3 L498.8,166.3 L498.9,166.4 L499.1,166.4 L499.3,166.4 L499.4,166.5 L499.6,166.5 L499.8,166.5 L499.9,166.6 L500.1,166.6 L500.3,166.6 L500.4,166.7 L500.6,166.7 L500.8,166.7 L500.9,166.8 L501.1,166.8 L501.3,166.9 L501.4,166.9 L501.6,166.9 L501.8,167.0 L501.9,167.0 L502.1,167.0 L502.3,167.1 L502.4,167.1 L502.6,167.2 L502.8,167.2 L502.9,167.2 L503.1,167.3 L503.3,167.3 L503.4,167.4 L503.6,167.4 L503.8,167.4 L503.9,167.5 L504.1,167.5 L504.3,167.6 L504.4,167.6 L504.6,167.6 L504.8,167.7 L504.9,167.7 L505.1,167.8 L505.3,167.8 L505.4,167.9 L505.6,167.9 L505.8,167.9 L505.9,168.0 L506.1,168.0 L506.3,168.1 L506.5,168.1 L506.6,168.2 L506.8,168.2 L507.0,168.2 L507.1,168.3 L507.3,168.3 L507.5,168.4 L507.6,168.4 L507.8,168.5 L508.0,168.5 L508.1,168.6 L508.3,168.6 L508.5,168.7 L508.6,168.7 L508.8,168.8 L509.0,168.8 L509.1,168.9 L509.3,168.9 L509.5,169.0 L509.6,169.0 L509.8,169.1 L510.0,169.1 L510.1,169.1 L510.3,169.2 L510.5,169.2 L510.6,169.3 L510.8,169.4 L511.0,169.4 L511.1,169.5 L511.3,169.5 L511.5,169.6 L511.6,169.6 L511.8,169.7 L512.0,169.7 L512.1,169.8 L512.3,169.8 L512.5,169.9 L512.6,169.9 L512.8,170.0 L513.0,170.0 L513.1,170.1 L513.3,170.1 L513.5,170.2 L513.6,170.3 L513.8,170.3 L514.0,170.4 L514.1,170.4 L514.3,170.5 L514.5,170.5 L514.6,170.6 L514.8,170.6 L515.0,170.7 L515.1,170.8 L515.3,170.8 L515.5,170.9 L515.6,170.9 L515.8,171.0 L516.0,171.1 L516.1,171.1 L516.3,171.2 L516.5,171.2 L516.6,171.3 L516.8,171.4 L517.0,171.4 L517.1,171.5 L517.3,171.5 L517.5,171.6 L517.6,171.7 L517.8,171.7 L518.0,171.8 L518.1,171.8 L518.3,171.9 L518.5,172.0 L518.6,172.0 L518.8,172.1 L519.0,172.2 L519.1,172.2 L519.3,172.3 L519.5,172.4 L519.6,172.4 L519.8,172.5 L520.0,172.6 L520.1,172.6 L520.3,172.7 L520.5,172.8 L520.6,172.8 L520.8,172.9 L521.0,173.0 L521.1,173.0 L521.3,173.1 L521.5,173.2 L521.6,173.2 L521.8,173.3 L522.0,173.4 L522.1,173.4 L522.3,173.5 L522.5,173.6 L522.6,173.7 L522.8,173.7 L523.0,173.8 L523.1,173.9 L523.3,173.9 L523.5,174.0 L523.7,174.1 L523.8,174.2 L524.0,174.2 L524.2,174.3 L524.3,174.4 L524.5,174.5 L524.7,174.5 L524.8,174.6 L525.0,174.7 L525.2,174.8 L525.3,174.8 L525.5,174.9 L525.7,175.0 L525.8,175.1 L526.0,175.1 L526.2,175.2 L526.3,175.3 L526.5,175.4 L526.7,175.4 L526.8,175.5 L527.0,175.6 L527.2,175.7 L527.3,175.8 L527.5,175.8 L527.7,175.9 L527.8,176.0 L528.0,176.1 L528.2,176.2 L528.3,176.2 L528.5,176.3 L528.7,176.4 L528.8,176.5 L529.0,176.6 L529.2,176.7 L529.3,176.7 L529.5,176.8 L529.7,176.9 L529.8,177.0 L530.0,177.1 L530.2,177.2 L530.3,177.3 L530.5,177.3 L530.7,177.4 L530.8,177.5 L531.0,177.6 L531.2,177.7 L531.3,177.8 L531.5,177.9 L531.7,177.9 L531.8,178.0 L532.0,178.1 L532.2,178.2 L532.3,178.3 L532.5,178.4 L532.7,178.5 L532.8,178.6 L533.0,178.7 L533.2,178.8 L533.3,178.9 L533.5,178.9 L533.7,179.0 L533.8,179.1 L534.0,179.2 L534.2,179.3 L534.3,179.4 L534.5,179.5 L534.7,179.6 L534.8,179.7 L535.0,179.8 L535.2,179.9 L535.3,180.0 L535.5,180.1 L535.7,180.2 L535.8,180.3 L536.0,180.4 L536.2,180.5 L536.3,180.6 L536.5,180.7 L536.7,180.8 L536.8,180.9 L537.0,181.0 L537.2,181.1 L537.3,181.2 L537.5,181.3 L537.7,181.4 L537.8,181.5 L538.0,181.6 L538.2,181.7 L538.3,181.8 L538.5,181.9 L538.7,182.0 L538.8,182.1 L539.0,182.2 L539.2,182.3 L539.3,182.4 L539.5,182.5 L539.7,182.6 L539.8,182.7 L540.0,182.8 L540.2,182.9 L540.3,183.0 L540.5,183.1 L540.7,183.3 L540.9,183.4 L541.0,183.5 L541.2,183.6 L541.4,183.7 L541.5,183.8 L541.7,183.9 L541.9,184.0 L542.0,184.1 L542.2,184.2 L542.4,184.4 L542.5,184.5 L542.7,184.6 L542.9,184.7 L543.0,184.8 L543.2,184.9 L543.4,185.0 L543.5,185.2 L543.7,185.3 L543.9,185.4 L544.0,185.5 L544.2,185.6 L544.4,185.7 L544.5,185.9 L544.7,186.0 L544.9,186.1 L545.0,186.2 L545.2,186.3 L545.4,186.5 L545.5,186.6 L545.7,186.7 L545.9,186.8 L546.0,186.9 L546.2,187.1 L546.4,187.2 L546.5,187.3 L546.7,187.4 L546.9,187.5 L547.0,187.7 L547.2,187.8 L547.4,187.9 L547.5,188.0 L547.7,188.2 L547.9,188.3 L548.0,188.4 L548.2,188.5 L548.4,188.7 L548.5,188.8 L548.7,188.9 L548.9,189.1 L549.0,189.2 L549.2,189.3 L549.4,189.5 L549.5,189.6 L549.7,189.7 L549.9,189.8 L550.0,190.0 L550.2,190.1 L550.4,190.2 L550.5,190.4 L550.7,190.5 L550.9,190.6 L551.0,190.8 L551.2,190.9 L551.4,191.0 L551.5,191.2 L551.7,191.3 L551.9,191.5 L552.0,191.6 L552.2,191.7 L552.4,191.9 L552.5,192.0 L552.7,192.1 L552.9,192.3 L553.0,192.4 L553.2,192.6 L553.4,192.7 L553.5,192.9 L553.7,193.0 L553.9,193.1 L554.0,193.3 L554.2,193.4 L554.4,193.6 L554.5,193.7 L554.7,193.9 L554.9,194.0 L555.0,194.1 L555.2,194.3 L555.4,194.4 L555.5,194.6 L555.7,194.7 L555.9,194.9 L556.0,195.0 L556.2,195.2 L556.4,195.3 L556.5,195.5 L556.7,195.6 L556.9,195.8 L557.0,195.9 L557.2,196.1 L557.4,196.2 L557.5,196.4 L557.7,196.6 L557.9,196.7 L558.1,196.9 L558.2,197.0 L558.4,197.2 L558.6,197.3 L558.7,197.5 L558.9,197.6 L559.1,197.8 L559.2,198.0 L559.4,198.1 L559.6,198.3 L559.7,198.4 L559.9,198.6 L560.1,198.8 L560.2,198.9 L560.4,199.1 L560.6,199.3 L560.7,199.4 L560.9,199.6 L561.1,199.7 L561.2,199.9 L561.4,200.1 L561.6,200.2 L561.7,200.4 L561.9,200.6 L562.1,200.7 L562.2,200.9 L562.4,201.1 L562.6,201.3 L562.7,201.4 L562.9,201.6 L563.1,201.8 L563.2,201.9 L563.4,202.1 L563.6,202.3 L563.7,202.5 L563.9,202.6 L564.1,202.8 L564.2,203.0 L564.4,203.2 L564.6,203.3 L564.7,203.5 L564.9,203.7 L565.1,203.9 L565.2,204.1 L565.4,204.2 L565.6,204.4 L565.7,204.6 L565.9,204.8 L566.1,205.0 L566.2,205.1 L566.4,205.3 L566.6,205.5 L566.7,205.7 L566.9,205.9 L567.1,206.1 L567.2,206.3 L567.4,206.4 L567.6,206.6 L567.7,206.8 L567.9,207.0 L568.1,207.2 L568.2,207.4 L568.4,207.6 L568.6,207.8 L568.7,208.0 L568.9,208.2 L569.1,208.4 L569.2,208.6 L569.4,208.7 L569.6,208.9 L569.7,209.1 L569.9,209.3 L570.1,209.5 L570.2,209.7 L570.4,209.9 L570.6,210.1 L570.7,210.3 L570.9,210.5 L571.1,210.7 L571.2,210.9 L571.4,211.1 L571.6,211.4 L571.7,211.6 L571.9,211.8 L572.1,212.0 L572.2,212.2 L572.4,212.4 L572.6,212.6 L572.7,212.8 L572.9,213.0 L573.1,213.2 L573.2,213.4 L573.4,213.7 L573.6,213.9 L573.7,214.1 L573.9,214.3 L574.1,214.5 L574.2,214.7 L574.4,214.9 L574.6,215.2 L574.8,215.4 L574.9,215.6 L575.1,215.8 L575.3,216.1 L575.4,216.3 L575.6,216.5 L575.8,216.7 L575.9,216.9 L576.1,217.2 L576.3,217.4 L576.4,217.6 L576.6,217.9 L576.8,218.1 L576.9,218.3 L577.1,218.5 L577.3,218.8 L577.4,219.0 L577.6,219.2 L577.8,219.5 L577.9,219.7 L578.1,220.0 L578.3,220.2 L578.4,220.4 L578.6,220.7 L578.8,220.9 L578.9,221.1 L579.1,221.4 L579.3,221.6 L579.4,221.9 L579.6,222.1 L579.8,222.4 L579.9,222.6 L580.1,222.9 L580.3,223.1 L580.4,223.4 L580.6,223.6 L580.8,223.9 L580.9,224.1 L581.1,224.4 L581.3,224.6 L581.4,224.9 L581.6,225.1 L581.8,225.4 L581.9,225.7 L582.1,225.9 L582.3,226.2 L582.4,226.4 L582.6,226.7 L582.8,227.0 L582.9,227.2 L583.1,227.5 L583.3,227.8 L583.4,228.0 L583.6,228.3 L583.8,228.6 L583.9,228.9 L584.1,229.1 L584.3,229.4 L584.4,229.7 L584.6,230.0 L584.8,230.2 L584.9,230.5 L585.1,230.8 L585.3,231.1 L585.4,231.4 L585.6,231.7 L585.8,231.9 L585.9,232.2 L586.1,232.5 L586.3,232.8 L586.4,233.1 L586.6,233.4 L586.8,233.7 L586.9,234.0 L587.1,234.3 L587.3,234.6 L587.4,234.9 L587.6,235.2 L587.8,235.5 L587.9,235.8 L588.1,236.1 L588.3,236.4 L588.4,236.7 L588.6,237.0 L588.8,237.4 L588.9,237.7 L589.1,238.0 L589.3,238.3 L589.4,238.6 L589.6,238.9 L589.8,239.3 L589.9,239.6 L590.1,239.9 L590.3,240.2 L590.4,240.6 L590.6,240.9 L590.8,241.2 L590.9,241.6 L591.1,241.9 L591.3,242.3 L591.4,242.6 L591.6,242.9 L591.8,243.3 L592.0,243.6 L592.1,244.0 L592.3,244.3 L592.5,244.7 L592.6,245.1 L592.8,245.4 L593.0,245.8 L593.1,246.1 L593.3,246.5 L593.5,246.9 L593.6,247.2 L593.8,247.6 L594.0,248.0 L594.1,248.4 L594.3,248.7 L594.5,249.1 L594.6,249.5 L594.8,249.9 L595.0,250.3 L595.1,250.7 L595.3,251.1 L595.5,251.5 L595.6,251.9 L595.8,252.3 L596.0,252.7 L596.1,253.1 L596.3,253.5 L596.5,253.9 L596.6,254.3 L596.8,254.8 L597.0,255.2 L597.1,255.6 L597.3,256.1 L597.5,256.5 L597.6,256.9 L597.8,257.4 L598.0,257.8 L598.1,258.3 L598.3,258.7 L598.5,259.2 L598.6,259.7 L598.8,260.1 L599.0,260.6 L599.1,261.1 L599.3,261.6 L599.5,262.1 L599.6,262.6 L599.8,263.1 L600.0,263.6 L600.1,264.1 L600.3,264.6 L600.5,265.1 L600.6,265.6 L600.8,266.2 L601.0,266.7 L601.1,267.3 L601.3,267.8 L601.5,268.4 L601.6,268.9 L601.8,269.5 L602.0,270.1 L602.1,270.7 L602.3,271.3 L602.5,271.9 L602.6,272.5 L602.8,273.1 L603.0,273.7 L603.1,274.4 L603.3,275.0 L603.5,275.7 L603.6,276.3 L603.8,277.0 L604.0,277.7 L604.1,278.4 L604.3,279.2 L604.5,279.9 L604.6,280.6 L604.8,281.4 L605.0,282.2 L605.1,283.0 L605.3,283.8 L605.5,284.6 L605.6,285.5 L605.8,286.3 L606.0,287.2 L606.1,288.1 L606.3,289.1 L606.5,290.1 L606.6,291.1 L606.8,292.1 L607.0,293.1 L607.1,294.2 L607.3,295.4 L607.5,296.5 L607.6,297.8 L607.8,299.0 L608.0,300.4 L608.1,301.7 L608.3,303.2 L608.5,304.7 L608.6,306.3 L608.8,308.1 L609.0,309.9 L609.2,311.8 L609.3,313.9 L609.5,316.2 L609.7,318.7 L609.8,321.5 L610.0,324.5 L610.2,328.1 L610.3,332.1 L610.5,337.1 L610.7,343.2 L610.8,351.6 L611.0,364.9 L611.2,397.5 L611.3,377.3 L611.5,358.3 L611.7,348.4 L611.8,341.6 L612.0,336.5 L612.2,332.4 L612.3,329.0 L612.5,326.2 L612.7,323.6 L612.8,321.4 L613.0,319.4 L613.2,317.7 L613.3,316.0 L613.5,314.6 L613.7,313.2 L613.8,311.9 L614.0,310.8 L614.2,309.7 L614.3,308.7 L614.5,307.7 L614.7,306.8 L614.8,306.0 L615.0,305.2 L615.2,304.4 L615.3,303.7 L615.5,303.1 L615.7,302.4 L615.8,301.8 L616.0,301.2 L616.2,300.7 L616.3,300.2 L616.5,299.7 L616.7,299.2 L616.8,298.7 L617.0,298.3 L617.2,297.9 L617.3,297.5 L617.5,297.1 L617.7,296.7 L617.8,296.4 L618.0,296.1 L618.2,295.7 L618.3,295.4 L618.5,295.1 L618.7,294.9 L618.8,294.6 L619.0,294.3 L619.2,294.1 L619.3,293.8 L619.5,293.6 L619.7,293.4 L619.8,293.2 L620.0,293.0 L620.2,292.8 L620.3,292.6 L620.5,292.4 L620.7,292.3 L620.8,292.1 L621.0,291.9 L621.2,291.8 L621.3,291.7 L621.5,291.5 L621.7,291.4 L621.8,291.3 L622.0,291.2 L622.2,291.0 L622.3,290.9 L622.5,290.8 L622.7,290.8 L622.8,290.7 L623.0,290.6 L623.2,290.5 L623.3,290.4 L623.5,290.4 L623.7,290.3 L623.8,290.2 L624.0,290.2 L624.2,290.1 L624.3,290.1 L624.5,290.1 L624.7,290.0 L624.8,290.0 L625.0,290.0 L625.2,289.9 L625.3,289.9 L625.5,289.9 L625.7,289.9 L625.8,289.9 L626.0,289.9 L626.2,289.9 L626.4,289.8 L626.5,289.9 L626.7,289.9 L626.9,289.9 L627.0,289.9 L627.2,289.9 L627.4,289.9 L627.5,289.9 L627.7,290.0 L627.9,290.0 L628.0,290.0 L628.2,290.0 L628.4,290.1 L628.5,290.1 L628.7,290.2 L628.9,290.2 L629.0,290.2 L629.2,290.3 L629.4,290.3 L629.5,290.4 L629.7,290.5 L629.9,290.5 L630.0,290.6 L630.2,290.6 L630.4,290.7 L630.5,290.8 L630.7,290.8 L630.9,290.9 L631.0,291.0 L631.2,291.1 L631.4,291.1 L631.5,291.2 L631.7,291.3 L631.9,291.4 L632.0,291.5 L632.2,291.6 L632.4,291.7 L632.5,291.8 L632.7,291.8 L632.9,291.9 L633.0,292.0 L633.2,292.1 L633.4,292.3 L633.5,292.4 L633.7,292.5 L633.9,292.6 L634.0,292.7 L634.2,292.8 L634.4,292.9 L634.5,293.0 L634.7,293.2 L634.9,293.3 L635.0,293.4 L635.2,293.5 L635.4,293.7 L635.5,293.8 L635.7,293.9 L635.9,294.0 L636.0,294.2 L636.2,294.3 L636.4,294.5 L636.5,294.6 L636.7,294.7 L636.9,294.9 L637.0,295.0 L637.2,295.2 L637.4,295.3 L637.5,295.5 L637.7,295.6 L637.9,295.8 L638.0,295.9 L638.2,296.1 L638.4,296.2 L638.5,296.4 L638.7,296.6 L638.9,296.7 L639.0,296.9 L639.2,297.1 L639.4,297.2 L639.5,297.4 L639.7,297.6 L639.9,297.8 L640.0,297.9 L640.2,298.1 L640.4,298.3 L640.5,298.5 L640.7,298.7 L640.9,298.9 L641.0,299.0 L641.2,299.2 L641.4,299.4 L641.5,299.6 L641.7,299.8 L641.9,300.0 L642.0,300.2 L642.2,300.4 L642.4,300.6 L642.5,300.8 L642.7,301.0 L642.9,301.2 L643.0,301.4 L643.2,301.7 L643.4,301.9 L643.6,302.1 L643.7,302.3 L643.9,302.5 L644.1,302.8 L644.2,303.0 L644.4,303.2 L644.6,303.4 L644.7,303.7 L644.9,303.9 L645.1,304.1 L645.2,304.4 L645.4,304.6 L645.6,304.9 L645.7,305.1 L645.9,305.4 L646.1,305.6 L646.2,305.9 L646.4,306.1 L646.6,306.4 L646.7,306.6 L646.9,306.9 L647.1,307.2 L647.2,307.4 L647.4,307.7 L647.6,308.0 L647.7,308.2 L647.9,308.5 L648.1,308.8 L648.2,309.1 L648.4,309.4 L648.6,309.7 L648.7,309.9 L648.9,310.2 L649.1,310.5 L649.2,310.8 L649.4,311.1 L649.6,311.5 L649.7,311.8 L649.9,312.1 L650.1,312.4 L650.2,312.7 L650.4,313.0 L650.6,313.4 L650.7,313.7 L650.9,314.0 L651.1,314.4 L651.2,314.7 L651.4,315.1 L651.6,315.4 L651.7,315.8 L651.9,316.1 L652.1,316.5 L652.2,316.9 L652.4,317.3 L652.6,317.6 L652.7,318.0 L652.9,318.4 L653.1,318.8 L653.2,319.2 L653.4,319.6 L653.6,320.0 L653.7,320.5 L653.9,320.9 L654.1,321.3 L654.2,321.8 L654.4,322.2 L654.6,322.7 L654.7,323.1 L654.9,323.6 L655.1,324.1 L655.2,324.5 L655.4,325.0 L655.6,325.5 L655.7,326.0 L655.9,326.6 L656.1,327.1 L656.2,327.6 L656.4,328.2 L656.6,328.7 L656.7,329.3 L656.9,329.9 L657.1,330.5 L657.2,331.1 L657.4,331.7 L657.6,332.4 L657.7,333.0 L657.9,333.7 L658.1,334.4 L658.2,335.1 L658.4,335.8 L658.6,336.6 L658.7,337.3 L658.9,338.1 L659.1,339.0 L659.2,339.8 L659.4,340.7 L659.6,341.6 L659.7,342.5 L659.9,343.5 L660.1,344.5 L660.2,345.6 L660.4,346.7 L660.6,347.8 L660.8,349.0 L660.9,350.3 L661.1,351.6 L661.3,353.0 L661.4,354.5 L661.6,356.1 L661.8,357.8 L661.9,359.7 L662.1,361.7 L662.3,363.8 L662.4,366.2 L662.6,368.9 L662.8,371.9 L662.9,375.3 L663.1,379.4 L663.3,384.3 L663.4,390.6 L663.6,397.5 L663.8,397.5 L663.9,397.5 L664.1,397.5 L664.3,397.5 L664.4,392.9 L664.6,386.3 L664.8,381.2 L664.9,377.1 L665.1,373.6 L665.3,370.7 L665.4,368.1 L665.6,365.8 L665.8,363.7 L665.9,361.8 L666.1,360.0 L666.3,358.4 L666.4,357.0 L666.6,355.6 L666.8,354.3 L666.9,353.1 L667.1,351.9 L667.3,350.8 L667.4,349.8 L667.6,348.8 L667.8,347.9 L667.9,347.0 L668.1,346.2 L668.3,345.4 L668.4,344.6 L668.6,343.9 L668.8,343.2 L668.9,342.5 L669.1,341.8 L669.3,341.2 L669.4,340.6 L669.6,340.0 L669.8,339.4 L669.9,338.8 L670.1,338.3 L670.3,337.8 L670.4,337.3 L670.6,336.8 L670.8,336.3 L670.9,335.9 L671.1,335.4 L671.3,335.0 L671.4,334.6 L671.6,334.1 L671.8,333.7 L671.9,333.3 L672.1,333.0 L672.3,332.6 L672.4,332.2 L672.6,331.9 L672.8,331.5 L672.9,331.2 L673.1,330.9 L673.3,330.6 L673.4,330.2 L673.6,329.9 L673.8,329.6 L673.9,329.4 L674.1,329.1 L674.3,328.8 L674.4,328.5 L674.6,328.3 L674.8,328.0 L674.9,327.7 L675.1,327.5 L675.3,327.3 L675.4,327.0 L675.6,326.8 L675.8,326.6 L675.9,326.3 L676.1,326.1 L676.3,325.9 L676.4,325.7 L676.6,325.5 L676.8,325.3 L676.9,325.1 L677.1,324.9 L677.3,324.7 L677.5,324.5 L677.6,324.4 L677.8,324.2 L678.0,324.0 L678.1,323.9 L678.3,323.7 L678.5,323.5 L678.6,323.4 L678.8,323.2 L679.0,323.1 L679.1,322.9 L679.3,322.8 L679.5,322.6 L679.6,322.5 L679.8,322.4 L680.0,322.2 L680.1,322.1 L680.3,322.0 L680.5,321.9 L680.6,321.7 L680.8,321.6 L681.0,321.5 L681.1,321.4 L681.3,321.3 L681.5,321.2 L681.6,321.1 L681.8,321.0 L682.0,320.9 L682.1,320.8 L682.3,320.7 L682.5,320.6 L682.6,320.5 L682.8,320.5 L683.0,320.4 L683.1,320.3 L683.3,320.2 L683.5,320.1 L683.6,320.1 L683.8,320.0 L684.0,319.9 L684.1,319.9 L684.3,319.8 L684.5,319.8 L684.6,319.7 L684.8,319.6 L685.0,319.6 L685.1,319.5 L685.3,319.5 L685.5,319.4 L685.6,319.4 L685.8,319.4 L686.0,319.3 L686.1,319.3 L686.3,319.2 L686.5,319.2 L686.6,319.2 L686.8,319.2 L687.0,319.1 L687.1,319.1 L687.3,319.1 L687.5,319.1 L687.6,319.0 L687.8,319.0 L688.0,319.0 L688.1,319.0 L688.3,319.0 L688.5,319.0 L688.6,319.0 L688.8,319.0 L689.0,319.0 L689.1,319.0 L689.3,319.0 L689.5,319.0 L689.6,319.0 L689.8,319.0 L690.0,319.0 L690.1,319.0 L690.3,319.0 L690.5,319.1 L690.6,319.1 L690.8,319.1 L691.0,319.1 L691.1,319.2 L691.3,319.2 L691.5,319.2 L691.6,319.3 L691.8,319.3 L692.0,319.3 L692.1,319.4 L692.3,319.4 L692.5,319.5 L692.6,319.5 L692.8,319.5 L693.0,319.6 L693.1,319.6 L693.3,319.7 L693.5,319.8 L693.6,319.8 L693.8,319.9 L694.0,319.9 L694.1,320.0 L694.3,320.1 L694.5,320.1 L694.7,320.2 L694.8,320.3 L695.0,320.4 L695.2,320.5 L695.3,320.5 L695.5,320.6 L695.7,320.7 L695.8,320.8 L696.0,320.9 L696.2,321.0 L696.3,321.1 L696.5,321.2 L696.7,321.3 L696.8,321.4 L697.0,321.5 L697.2,321.6 L697.3,321.7 L697.5,321.8 L697.7,322.0 L697.8,322.1 L698.0,322.2 L698.2,322.3 L698.3,322.5 L698.5,322.6 L698.7,322.7 L698.8,322.9 L699.0,323.0 L699.2,323.2 L699.3,323.3 L699.5,323.5 L699.7,323.6 L699.8,323.8 L700.0,323.9 L700.2,324.1 L700.3,324.3 L700.5,324.4 L700.7,324.6 L700.8,324.8 L701.0,325.0 L701.2,325.1 L701.3,325.3 L701.5,325.5 L701.7,325.7 L701.8,325.9 L702.0,326.1 L702.2,326.3 L702.3,326.5 L702.5,326.7 L702.7,327.0 L702.8,327.2 L703.0,327.4 L703.2,327.6 L703.3,327.9 L703.5,328.1 L703.7,328.4 L703.8,328.6 L704.0,328.9 L704.2,329.1 L704.3,329.4 L704.5,329.7 L704.7,330.0 L704.8,330.2 L705.0,330.5 L705.2,330.8 L705.3,331.1 L705.5,331.4 L705.7,331.7 L705.8,332.1 L706.0,332.4 L706.2,332.7 L706.3,333.1 L706.5,333.4 L706.7,333.8 L706.8,334.1 L707.0,334.5 L707.2,334.9 L707.3,335.3 L707.5,335.7 L707.7,336.1 L707.8,336.5 L708.0,336.9 L708.2,337.3 L708.3,337.8 L708.5,338.2 L708.7,338.7 L708.8,339.2 L709.0,339.7 L709.2,340.2 L709.3,340.7 L709.5,341.2 L709.7,341.8 L709.8,342.3 L710.0,342.9 L710.2,343.5 L710.3,344.1 L710.5,344.8 L710.7,345.4 L710.8,346.1 L711.0,346.8 L711.2,347.5 L711.3,348.3 L711.5,349.0 L711.7,349.8 L711.9,350.7 L712.0,351.6 L712.2,352.5 L712.4,353.4 L712.5,354.4 L712.7,355.4 L712.9,356.5 L713.0,357.7 L713.2,358.9 L713.4,360.2 L713.5,361.5 L713.7,363.0 L713.9,364.6 L714.0,366.2 L714.2,368.0 L714.4,370.0 L714.5,372.1 L714.7,374.5 L714.9,377.2 L715.0,380.2 L715.2,383.7 L715.4,387.9 L715.5,393.0 L715.7,397.5 L715.9,397.5 L716.0,397.5 L716.2,397.5 L716.4,397.5 L716.5,397.5 L716.7,397.5 L716.9,392.1 L717.0,387.2 L717.2,383.2 L717.4,379.8 L717.5,376.9 L717.7,374.3 L717.9,372.0 L718.0,369.9 L718.2,368.0 L718.4,366.3 L718.5,364.6 L718.7,363.1 L718.9,361.7 L719.0,360.4 L719.2,359.2 L719.4,358.0 L719.5,356.9 L719.7,355.8 L719.9,354.8 L720.0,353.9 L720.2,352.9 L720.4,352.1 L720.5,351.2 L720.7,350.4 L720.9,349.7 L721.0,348.9 L721.2,348.2 L721.4,347.5 L721.5,346.8 L721.7,346.2 L721.9,345.6 L722.0,345.0 L722.2,344.4 L722.4,343.8 L722.5,343.3 L722.7,342.7 L722.9,342.2 L723.0,341.7 L723.2,341.2 L723.4,340.8 L723.5,340.3 L723.7,339.9 L723.9,339.4 L724.0,339.0 L724.2,338.6 L724.4,338.2 L724.5,337.8 L724.7,337.4 L724.9,337.0 L725.0,336.7 L725.2,336.3 L725.4,336.0 L725.5,335.6 L725.7,335.3 L725.9,335.0 L726.0,334.7 L726.2,334.4 L726.4,334.1 L726.5,333.8 L726.7,333.5 L726.9,333.2 L727.0,332.9 L727.2,332.7 L727.4,332.4 L727.5,332.2 L727.7,331.9 L727.9,331.7 L728.0,331.4 L728.2,331.2 L728.4,331.0 L728.5,330.8 L728.7,330.5 L728.9,330.3 L729.1,330.1 L729.2,329.9 L729.4,329.7 L729.6,329.5 L729.7,329.3 L729.9,329.2 L730.1,329.0 L730.2,328.8 L730.4,328.7 L730.6,328.5 L730.7,328.3 L730.9,328.2 L731.1,328.0 L731.2,327.9 L731.4,327.7 L731.6,327.6 L731.7,327.5 L731.9,327.3 L732.1,327.2 L732.2,327.1 L732.4,326.9 L732.6,326.8 L732.7,326.7 L732.9,326.6 L733.1,326.5 L733.2,326.4 L733.4,326.3 L733.6,326.2 L733.7,326.1 L733.9,326.0 L734.1,325.9 L734.2,325.8 L734.4,325.8 L734.6,325.7 L734.7,325.6 L734.9,325.5 L735.1,325.5 L735.2,325.4 L735.4,325.3 L735.6,325.3 L735.7,325.2 L735.9,325.2 L736.1,325.1 L736.2,325.1 L736.4,325.0 L736.6,325.0 L736.7,325.0 L736.9,324.9 L737.1,324.9 L737.2,324.9 L737.4,324.9 L737.6,324.8 L737.7,324.8 L737.9,324.8 L738.1,324.8 L738.2,324.8 L738.4,324.8 L738.6,324.8 L738.7,324.8 L738.9,324.8 L739.1,324.8 L739.2,324.8 L739.4,324.8 L739.6,324.8 L739.7,324.8 L739.9,324.8 L740.1,324.9 L740.2,324.9 L740.4,324.9 L740.6,324.9 L740.7,325.0 L740.9,325.0 L741.1,325.0 L741.2,325.1 L741.4,325.1 L741.6,325.2 L741.7,325.2 L741.9,325.3 L742.1,325.3 L742.2,325.4 L742.4,325.5 L742.6,325.5 L742.7,325.6 L742.9,325.7 L743.1,325.8 L743.2,325.8 L743.4,325.9 L743.6,326.0 L743.7,326.1 L743.9,326.2 L744.1,326.3 L744.2,326.4 L744.4,326.5 L744.6,326.6 L744.7,326.7 L744.9,326.8 L745.1,326.9 L745.2,327.0 L745.4,327.2 L745.6,327.3 L745.8,327.4 L745.9,327.5 L746.1,327.7 L746.3,327.8 L746.4,328.0 L746.6,328.1 L746.8,328.3 L746.9,328.4 L747.1,328.6 L747.3,328.7 L747.4,328.9 L747.6,329.1 L747.8,329.2 L747.9,329.4 L748.1,329.6 L748.3,329.8 L748.4,330.0 L748.6,330.2 L748.8,330.4 L748.9,330.6 L749.1,330.8 L749.3,331.0 L749.4,331.2 L749.6,331.5 L749.8,331.7 L749.9,331.9 L750.1,332.2 L750.3,332.4 L750.4,332.7 L750.6,332.9 L750.8,333.2 L750.9,333.4 L751.1,333.7 L751.3,334.0 L751.4,334.3 L751.6,334.6 L751.8,334.9 L751.9,335.2 L752.1,335.5 L752.3,335.8 L752.4,336.2 L752.6,336.5 L752.8,336.8 L752.9,337.2 L753.1,337.5 L753.3,337.9 L753.4,338.3 L753.6,338.7 L753.8,339.1 L753.9,339.5 L754.1,339.9 L754.3,340.3 L754.4,340.8 L754.6,341.2 L754.8,341.7 L754.9,342.1 L755.1,342.6 L755.3,343.1 L755.4,343.6 L755.6,344.2 L755.8,344.7 L755.9,345.3 L756.1,345.8 L756.3,346.4 L756.4,347.0 L756.6,347.7 L756.8,348.3 L756.9,349.0 L757.1,349.7 L757.3,350.4 L757.4,351.2 L757.6,351.9 L757.8,352.7 L757.9,353.6 L758.1,354.4 L758.3,355.4 L758.4,356.3 L758.6,357.3 L758.8,358.3 L758.9,359.4 L759.1,360.6 L759.3,361.8 L759.4,363.1 L759.6,364.5 L759.8,366.0 L759.9,367.5 L760.1,369.2 L760.3,371.0 L760.4,373.0 L760.6,375.2 L760.8,377.7 L760.9,380.4 L761.1,383.5 L761.3,387.1 L761.4,391.4 L761.6,396.7 L761.8,397.5 L761.9,397.5 L762.1,397.5 L762.3,397.5 L762.4,397.5 L762.6,397.5 L762.8,397.5 L763.0,393.8 L763.1,389.1 L763.3,385.2 L763.5,381.9 L763.6,379.1 L763.8,376.5 L764.0,374.3 L764.1,372.2 L764.3,370.3 L764.5,368.6 L764.6,367.0 L764.8,365.5 L765.0,364.1 L765.1,362.8 L765.3,361.6 L765.5,360.4 L765.6,359.3 L765.8,358.3 L766.0,357.3 L766.1,356.3 L766.3,355.4 L766.5,354.6 L766.6,353.7 L766.8,352.9 L767.0,352.2 L767.1,351.4 L767.3,350.7 L767.5,350.1 L767.6,349.4 L767.8,348.8 L768.0,348.1 L768.1,347.5 L768.3,347.0 L768.5,346.4 L768.6,345.9 L768.8,345.3 L769.0,344.8 L769.1,344.3 L769.3,343.9 L769.5,343.4 L769.6,342.9 L769.8,342.5 L770.0,342.1 L770.1,341.7 L770.3,341.3 L770.5,340.9 L770.6,340.5 L770.8,340.1 L771.0,339.7 L771.1,339.4 L771.3,339.0 L771.5,338.7 L771.6,338.4 L771.8,338.0 L772.0,337.7 L772.1,337.4 L772.3,337.1 L772.5,336.8 L772.6,336.5 L772.8,336.3 L773.0,336.0 L773.1,335.7 L773.3,335.5 L773.5,335.2 L773.6,335.0 L773.8,334.7 L774.0,334.5 L774.1,334.3 L774.3,334.1 L774.5,333.8 L774.6,333.6 L774.8,333.4 L775.0,333.2 L775.1,333.0 L775.3,332.8 L775.5,332.6 L775.6,332.5 L775.8,332.3 L776.0,332.1 L776.1,331.9 L776.3,331.8 L776.5,331.6 L776.6,331.5 L776.8,331.3 L777.0,331.2 L777.1,331.0 L777.3,330.9 L777.5,330.8 L777.6,330.6 L777.8,330.5 L778.0,330.4 L778.1,330.3 L778.3,330.2 L778.5,330.1 L778.6,330.0 L778.8,329.8 L779.0,329.8 L779.1,329.7 L779.3,329.6 L779.5,329.5 L779.6,329.4 L779.8,329.3 L780.0,329.2 L780.2,329.2 L780.3,329.1 L780.5,329.0 L780.7,329.0 L780.8,328.9 L781.0,328.8 L781.2,328.8 L781.3,328.7 L781.5,328.7 L781.7,328.7 L781.8,328.6 L782.0,328.6 L782.2,328.5 L782.3,328.5 L782.5,328.5 L782.7,328.5 L782.8,328.4 L783.0,328.4 L783.2,328.4 L783.3,328.4 L783.5,328.4 L783.7,328.4 L783.8,328.4 L784.0,328.4 L784.2,328.4 L784.3,328.4 L784.5,328.4 L784.7,328.4 L784.8,328.4 L785.0,328.5 L785.2,328.5 L785.3,328.5 L785.5,328.5 L785.7,328.6 L785.8,328.6 L786.0,328.6 L786.2,328.7 L786.3,328.7 L786.5,328.8 L786.7,328.8 L786.8,328.9 L787.0,328.9 L787.2,329.0 L787.3,329.1 L787.5,329.1 L787.7,329.2 L787.8,329.3 L788.0,329.4 L788.2,329.4 L788.3,329.5 L788.5,329.6 L788.7,329.7 L788.8,329.8 L789.0,329.9 L789.2,330.0 L789.3,330.1 L789.5,330.2 L789.7,330.3 L789.8,330.5 L790.0,330.6 L790.2,330.7 L790.3,330.8 L790.5,331.0 L790.7,331.1 L790.8,331.2 L791.0,331.4 L791.2,331.5 L791.3,331.7 L791.5,331.8 L791.7,332.0 L791.8,332.1 L792.0,332.3 L792.2,332.5 L792.3,332.7 L792.5,332.8 L792.7,333.0 L792.8,333.2 L793.0,333.4 L793.2,333.6 L793.3,333.8 L793.5,334.0 L793.7,334.2 L793.8,334.5 L794.0,334.7 L794.2,334.9 L794.3,335.1 L794.5,335.4 L794.7,335.6 L794.8,335.9 L795.0,336.1 L795.2,336.4 L795.3,336.7 L795.5,336.9 L795.7,337.2 L795.8,337.5 L796.0,337.8 L796.2,338.1 L796.3,338.4 L796.5,338.7 L796.7,339.0 L796.8,339.4 L797.0,339.7 L797.2,340.1 L797.4,340.4 L797.5,340.8 L797.7,341.1 L797.9,341.5 L798.0,341.9 L798.2,342.3 L798.4,342.7 L798.5,343.1 L798.7,343.6 L798.9,344.0 L799.0,344.5 L799.2,344.9 L799.4,345.4 L799.5,345.9 L799.7,346.4 L799.9,346.9 L800.0,347.5 L800.2,348.0 L800.4,348.6 L800.5,349.2 L800.7,349.8 L800.9,350.4 L801.0,351.0 L801.2,351.7 L801.4,352.4 L801.5,353.1 L801.7,353.8 L801.9,354.6 L802.0,355.4 L802.2,356.2 L802.4,357.1 L802.5,358.0 L802.7,358.9 L802.9,359.9 L803.0,360.9 L803.2,362.0 L803.4,363.2 L803.5,364.4 L803.7,365.6 L803.9,367.0 L804.0,368.4 L804.2,370.0 L804.4,371.6 L804.5,373.4 L804.7,375.4 L804.9,377.5 L805.0,379.9 L805.2,382.5 L805.4,385.5 L805.5,389.0 L805.7,393.1 L805.9,397.5 L806.0,397.5 L806.2,397.5 L806.4,397.5 L806.5,397.5 L806.7,397.5 L806.9,397.5 L807.0,397.5 L807.2,397.5 L807.4,393.0 L807.5,389.0 L807.7,385.6 L807.9,382.6 L808.0,380.0 L808.2,377.7 L808.4,375.5 L808.5,373.6 L808.7,371.9 L808.9,370.2 L809.0,368.7 L809.2,367.3 L809.4,366.0 L809.5,364.7 L809.7,363.6 L809.9,362.4 L810.0,361.4 L810.2,360.4 L810.4,359.4 L810.5,358.5 L810.7,357.6 L810.9,356.8 L811.0,356.0 L811.2,355.2 L811.4,354.5 L811.5,353.8 L811.7,353.1 L811.9,352.4 L812.0,351.8 L812.2,351.1 L812.4,350.5 L812.5,350.0 L812.7,349.4 L812.9,348.9 L813.0,348.3 L813.2,347.8 L813.4,347.3 L813.5,346.8 L813.7,346.4 L813.9,345.9 L814.0,345.5 L814.2,345.0 L814.4,344.6 L814.6,344.2 L814.7,343.8 L814.9,343.4 L815.1,343.1 L815.2,342.7 L815.4,342.3 L815.6,342.0 L815.7,341.6 L815.9,341.3 L816.1,341.0 L816.2,340.7 L816.4,340.4 L816.6,340.1 L816.7,339.8 L816.9,339.5 L817.1,339.2 L817.2,338.9 L817.4,338.7 L817.6,338.4 L817.7,338.2 L817.9,337.9 L818.1,337.7 L818.2,337.5 L818.4,337.2 L818.6,337.0 L818.7,336.8 L818.9,336.6 L819.1,336.4 L819.2,336.2 L819.4,336.0 L819.6,335.8 L819.7,335.6 L819.9,335.4 L820.1,335.3 L820.2,335.1 L820.4,334.9 L820.6,334.8 L820.7,334.6 L820.9,334.4 L821.1,334.3 L821.2,334.2 L821.4,334.0 L821.6,333.9 L821.7,333.8 L821.9,333.6 L822.1,333.5 L822.2,333.4 L822.4,333.3 L822.6,333.2 L822.7,333.1 L822.9,332.9 L823.1,332.8 L823.2,332.8 L823.4,332.7 L823.6,332.6 L823.7,332.5 L823.9,332.4 L824.1,332.3 L824.2,332.3 L824.4,332.2 L824.6,332.1 L824.7,332.1 L824.9,332.0 L825.1,331.9 L825.2,331.9 L825.4,331.8 L825.6,331.8 L825.7,331.7 L825.9,331.7 L826.1,331.7 L826.2,331.6 L826.4,331.6 L826.6,331.6 L826.7,331.6 L826.9,331.5 L827.1,331.5 L827.2,331.5 L827.4,331.5 L827.6,331.5 L827.7,331.5 L827.9,331.5 L828.1,331.5 L828.2,331.5 L828.4,331.5 L828.6,331.5 L828.7,331.5 L828.9,331.6 L829.1,331.6 L829.2,331.6 L829.4,331.6 L829.6,331.7 L829.7,331.7 L829.9,331.7 L830.1,331.8 L830.2,331.8 L830.4,331.9 L830.6,331.9 L830.7,332.0 L830.9,332.0 L831.1,332.1 L831.2,332.2 L831.4,332.2 L831.6,332.3 L831.8,332.4 L831.9,332.5 L832.1,332.5 L832.3,332.6 L832.4,332.7 L832.6,332.8 L832.8,332.9 L832.9,333.0 L833.1,333.1 L833.3,333.2 L833.4,333.3 L833.6,333.4 L833.8,333.6 L833.9,333.7 L834.1,333.8 L834.3,333.9 L834.4,334.1 L834.6,334.2 L834.8,334.3 L834.9,334.5 L835.1,334.6 L835.3,334.8 L835.4,335.0 L835.6,335.1 L835.8,335.3 L835.9,335.4 L836.1,335.6 L836.3,335.8 L836.4,336.0 L836.6,336.2 L836.8,336.4 L836.9,336.6 L837.1,336.8 L837.3,337.0 L837.4,337.2 L837.6,337.4 L837.8,337.6 L837.9,337.9 L838.1,338.1 L838.3,338.3 L838.4,338.6 L838.6,338.8 L838.8,339.1 L838.9,339.3 L839.1,339.6 L839.3,339.9 L839.4,340.2 L839.6,340.5 L839.8,340.8 L839.9,341.1 L840.1,341.4 L840.3,341.7 L840.4,342.0 L840.6,342.3 L840.8,342.7 L840.9,343.0 L841.1,343.4 L841.3,343.7 L841.4,344.1 L841.6,344.5 L841.8,344.9 L841.9,345.3 L842.1,345.7 L842.3,346.1 L842.4,346.6 L842.6,347.0 L842.8,347.5 L842.9,347.9 L843.1,348.4 L843.3,348.9 L843.4,349.4 L843.6,350.0 L843.8,350.5 L843.9,351.1 L844.1,351.6 L844.3,352.2 L844.4,352.9 L844.6,353.5 L844.8,354.1 L844.9,354.8 L845.1,355.5 L845.3,356.2 L845.4,357.0 L845.6,357.8 L845.8,358.6 L845.9,359.4 L846.1,360.3 L846.3,361.2 L846.4,362.2 L846.6,363.2 L846.8,364.3 L846.9,365.4 L847.1,366.5 L847.3,367.8 L847.4,369.1 L847.6,370.5 L847.8,372.0 L847.9,373.6 L848.1,375.3 L848.3,377.2 L848.5,379.2 L848.6,381.5 L848.8,384.0 L849.0,386.8 L849.1,390.1 L849.3,393.9 L849.5,397.5 L849.6,397.5 L849.8,397.5 L850.0,397.5 L850.1,397.5 L850.3,397.5 L850.5,397.5 L850.6,397.5 L850.8,397.5 L851.0,397.5 L851.1,393.3 L851.3,389.6 L851.5,386.5 L851.6,383.7 L851.8,381.3 L852.0,379.1 L852.1,377.1 L852.3,375.3 L852.5,373.6 L852.6,372.0 L852.8,370.6 L853.0,369.2 L853.1,367.9 L853.3,366.7 L853.5,365.6 L853.6,364.5 L853.8,363.5 L854.0,362.5 L854.1,361.5 L854.3,360.6 L854.5,359.8 L854.6,359.0 L854.8,358.2 L855.0,357.4 L855.1,356.7 L855.3,356.0 L855.5,355.3 L855.6,354.7 L855.8,354.0 L856.0,353.4 L856.1,352.8 L856.3,352.3 L856.5,351.7 L856.6,351.2 L856.8,350.7 L857.0,350.2 L857.1,349.7 L857.3,349.2 L857.5,348.7 L857.6,348.3 L857.8,347.9 L858.0,347.4 L858.1,347.0 L858.3,346.6 L858.5,346.2 L858.6,345.8 L858.8,345.5 L859.0,345.1 L859.1,344.8 L859.3,344.4 L859.5,344.1 L859.6,343.8 L859.8,343.4 L860.0,343.1 L860.1,342.8 L860.3,342.5 L860.5,342.2 L860.6,342.0 L860.8,341.7 L861.0,341.4 L861.1,341.2 L861.3,340.9 L861.5,340.7 L861.6,340.4 L861.8,340.2 L862.0,339.9 L862.1,339.7 L862.3,339.5 L862.5,339.3 L862.6,339.1 L862.8,338.9 L863.0,338.7 L863.1,338.5 L863.3,338.3 L863.5,338.1 L863.6,338.0 L863.8,337.8 L864.0,337.6 L864.1,337.5 L864.3,337.3 L864.5,337.1 L864.6,337.0 L864.8,336.8 L865.0,336.7 L865.1,336.6 L865.3,336.4 L865.5,336.3 L865.7,336.2 L865.8,336.1 L866.0,336.0 L866.2,335.8 L866.3,335.7 L866.5,335.6 L866.7,335.5 L866.8,335.4 L867.0,335.3 L867.2,335.2 L867.3,335.2 L867.5,335.1 L867.7,335.0 L867.8,334.9 L868.0,334.9 L868.2,334.8 L868.3,334.7 L868.5,334.7 L868.7,334.6 L868.8,334.6 L869.0,334.5 L869.2,334.5 L869.3,334.4 L869.5,334.4 L869.7,334.3 L869.8,334.3 L870.0,334.3 L870.2,334.3 L870.3,334.2 L870.5,334.2 L870.7,334.2 L870.8,334.2 L871.0,334.2 L871.2,334.2 L871.3,334.2 L871.5,334.2 L871.7,334.2 L871.8,334.2 L872.0,334.2 L872.2,334.2 L872.3,334.2 L872.5,334.2 L872.7,334.2 L872.8,334.3 L873.0,334.3 L873.2,334.3 L873.3,334.4 L873.5,334.4 L873.7,334.5 L873.8,334.5 L874.0,334.5 L874.2,334.6 L874.3,334.7 L874.5,334.7 L874.7,334.8 L874.8,334.8 L875.0,334.9 L875.2,335.0 L875.3,335.1 L875.5,335.1 L875.7,335.2 L875.8,335.3 L876.0,335.4 L876.2,335.5 L876.3,335.6 L876.5,335.7 L876.7,335.8 L876.8,335.9 L877.0,336.0 L877.2,336.1 L877.3,336.3 L877.5,336.4 L877.7,336.5 L877.8,336.6 L878.0,336.8 L878.2,336.9 L878.3,337.1 L878.5,337.2 L878.7,337.4 L878.8,337.5 L879.0,337.7 L879.2,337.8 L879.3,338.0 L879.5,338.2 L879.7,338.4 L879.8,338.5 L880.0,338.7 L880.2,338.9 L880.3,339.1 L880.5,339.3 L880.7,339.5 L880.8,339.7 L881.0,340.0 L881.2,340.2 L881.3,340.4 L881.5,340.6 L881.7,340.9 L881.8,341.1 L882.0,341.4 L882.2,341.6 L882.3,341.9 L882.5,342.2 L882.7,342.4 L882.9,342.7 L883.0,343.0 L883.2,343.3 L883.4,343.6 L883.5,343.9 L883.7,344.2 L883.9,344.6 L884.0,344.9 L884.2,345.2 L884.4,345.6 L884.5,345.9 L884.7,346.3 L884.9,346.7 L885.0,347.1 L885.2,347.5 L885.4,347.9 L885.5,348.3 L885.7,348.7 L885.9,349.1 L886.0,349.6 L886.2,350.0 L886.4,350.5 L886.5,351.0 L886.7,351.5 L886.9,352.0 L887.0,352.5 L887.2,353.1 L887.4,353.7 L887.5,354.2 L887.7,354.8 L887.9,355.4 L888.0,356.1 L888.2,356.7 L888.4,357.4 L888.5,358.1 L888.7,358.9 L888.9,359.6 L889.0,360.4 L889.2,361.2 L889.4,362.1 L889.5,363.0 L889.7,363.9 L889.9,364.9 L890.0,365.9 L890.2,367.0 L890.4,368.1 L890.5,369.3 L890.7,370.6 L890.9,371.9 L891.0,373.3 L891.2,374.9 L891.4,376.5 L891.5,378.3 L891.7,380.2 L891.9,382.3 L892.0,384.6 L892.2,387.2 L892.4,390.2 L892.5,393.6 L892.7,397.5 L892.9,397.5 L893.0,397.5 L893.2,397.5 L893.4,397.5 L893.5,397.5 L893.7,397.5 L893.9,397.5 L894.0,397.5 L894.2,397.5 L894.4,397.5 L894.5,394.4 L894.7,390.9 L894.9,387.9 L895.0,385.2 L895.2,382.9 L895.4,380.7 L895.5,378.8 L895.7,377.0 L895.9,375.4 L896.0,373.8 L896.2,372.4 L896.4,371.1 L896.5,369.8 L896.7,368.6 L896.9,367.5 L897.0,366.4 L897.2,365.4 L897.4,364.5 L897.5,363.5 L897.7,362.7 L897.9,361.8 L898.0,361.0 L898.2,360.2 L898.4,359.5 L898.5,358.8 L898.7,358.1 L898.9,357.4 L899.0,356.8 L899.2,356.1 L899.4,355.5 L899.5,354.9 L899.7,354.4 L899.9,353.8 L900.1,353.3 L900.2,352.8 L900.4,352.3 L900.6,351.8 L900.7,351.3 L900.9,350.9 L901.1,350.4 L901.2,350.0 L901.4,349.6 L901.6,349.2 L901.7,348.8 L901.9,348.4 L902.1,348.0 L902.2,347.6 L902.4,347.3 L902.6,346.9 L902.7,346.6 L902.9,346.2 L903.1,345.9 L903.2,345.6 L903.4,345.3 L903.6,345.0 L903.7,344.7 L903.9,344.4 L904.1,344.1 L904.2,343.9 L904.4,343.6 L904.6,343.3 L904.7,343.1 L904.9,342.8 L905.1,342.6 L905.2,342.4 L905.4,342.1 L905.6,341.9 L905.7,341.7 L905.9,341.5 L906.1,341.3 L906.2,341.1 L906.4,340.9 L906.6,340.7 L906.7,340.5 L906.9,340.3 L907.1,340.1 L907.2,340.0 L907.4,339.8 L907.6,339.6 L907.7,339.5 L907.9,339.3 L908.1,339.2 L908.2,339.0 L908.4,338.9 L908.6,338.8 L908.7,338.6 L908.9,338.5 L909.1,338.4 L909.2,338.3 L909.4,338.2 L909.6,338.0 L909.7,337.9 L909.9,337.8 L910.1,337.7 L910.2,337.6 L910.4,337.5 L910.6,337.5 L910.7,337.4 L910.9,337.3 L911.1,337.2 L911.2,337.1 L911.4,337.1 L911.6,337.0 L911.7,336.9 L911.9,336.9 L912.1,336.8 L912.2,336.8 L912.4,336.7 L912.6,336.7 L912.7,336.6 L912.9,336.6 L913.1,336.6 L913.2,336.5 L913.4,336.5 L913.6,336.5 L913.7,336.4 L913.9,336.4 L914.1,336.4 L914.2,336.4 L914.4,336.4 L914.6,336.4 L914.7,336.4 L914.9,336.4 L915.1,336.4 L915.2,336.4 L915.4,336.4 L915.6,336.4 L915.7,336.4 L915.9,336.5 L916.1,336.5 L916.2,336.5 L916.4,336.5 L916.6,336.6 L916.8,336.6 L916.9,336.7 L917.1,336.7 L917.3,336.7 L917.4,336.8 L917.6,336.9 L917.8,336.9 L917.9,337.0 L918.1,337.0 L918.3,337.1 L918.4,337.2 L918.6,337.3 L918.8,337.3 L918.9,337.4 L919.1,337.5 L919.3,337.6 L919.4,337.7 L919.6,337.8 L919.8,337.9 L919.9,338.0 L920.1,338.1 L920.3,338.2 L920.4,338.3 L920.6,338.4 L920.8,338.6 L920.9,338.7 L921.1,338.8 L921.3,338.9 L921.4,339.1 L921.6,339.2 L921.8,339.4 L921.9,339.5 L922.1,339.7 L922.3,339.8 L922.4,340.0 L922.6,340.2 L922.8,340.3 L922.9,340.5 L923.1,340.7 L923.3,340.9 L923.4,341.1 L923.6,341.3 L923.8,341.5 L923.9,341.7 L924.1,341.9 L924.3,342.1 L924.4,342.3 L924.6,342.6 L924.8,342.8 L924.9,343.0 L925.1,343.3 L925.3,343.5 L925.4,343.8 L925.6,344.0 L925.8,344.3 L925.9,344.6 L926.1,344.9 L926.3,345.1 L926.4,345.4 L926.6,345.7 L926.8,346.1 L926.9,346.4 L927.1,346.7 L927.3,347.0 L927.4,347.4 L927.6,347.7 L927.8,348.1 L927.9,348.4 L928.1,348.8 L928.3,349.2 L928.4,349.6 L928.6,350.0 L928.8,350.4 L928.9,350.8 L929.1,351.3 L929.3,351.7 L929.4,352.2 L929.6,352.7 L929.8,353.1 L929.9,353.7 L930.1,354.2 L930.3,354.7 L930.4,355.2 L930.6,355.8 L930.8,356.4 L930.9,357.0 L931.1,357.6 L931.3,358.3 L931.4,358.9 L931.6,359.6 L931.8,360.3 L931.9,361.1 L932.1,361.8 L932.3,362.6 L932.4,363.4 L932.6,364.3 L932.8,365.2 L932.9,366.1 L933.1,367.1 L933.3,368.2 L933.4,369.2 L933.6,370.4 L933.8,371.6 L934.0,372.9 L934.1,374.2 L934.3,375.7 L934.5,377.2 L934.6,378.9 L934.8,380.7 L935.0,382.7 L935.1,384.8 L935.3,387.2 L935.5,389.9 L935.6,393.0 L935.8,396.5 L936.0,397.5 L936.1,397.5 L936.3,397.5 L936.5,397.5 L936.6,397.5 L936.8,397.5 L937.0,397.5 L937.1,397.5 L937.3,397.5 L937.5,397.5 L937.6,397.5 L937.8,395.4 L938.0,392.0 L938.1,389.1 L938.3,386.5 L938.5,384.2 L938.6,382.2 L938.8,380.3 L939.0,378.5 L939.1,376.9 L939.3,375.4 L939.5,374.0 L939.6,372.7 L939.8,371.4 L940.0,370.3 L940.1,369.2 L940.3,368.1 L940.5,367.1 L940.6,366.1 L940.8,365.2 L941.0,364.4 L941.1,363.5 L941.3,362.7 L941.5,361.9 L941.6,361.2 L941.8,360.5 L942.0,359.8 L942.1,359.1 L942.3,358.5 L942.5,357.9 L942.6,357.3 L942.8,356.7 L943.0,356.1 L943.1,355.6 L943.3,355.1 L943.5,354.5 L943.6,354.1 L943.8,353.6 L944.0,353.1 L944.1,352.6 L944.3,352.2 L944.5,351.8 L944.6,351.3 L944.8,350.9 L945.0,350.5 L945.1,350.1 L945.3,349.8 L945.5,349.4 L945.6,349.0 L945.8,348.7 L946.0,348.4 L946.1,348.0 L946.3,347.7 L946.5,347.4 L946.6,347.1 L946.8,346.8 L947.0,346.5 L947.1,346.2 L947.3,345.9 L947.5,345.6 L947.6,345.4 L947.8,345.1 L948.0,344.9 L948.1,344.6 L948.3,344.4 L948.5,344.2 L948.6,343.9 L948.8,343.7 L949.0,343.5 L949.1,343.3 L949.3,343.1 L949.5,342.9 L949.6,342.7 L949.8,342.5 L950.0,342.3 L950.1,342.1 L950.3,341.9 L950.5,341.8 L950.6,341.6 L950.8,341.4 L951.0,341.3 L951.2,341.1 L951.3,341.0 L951.5,340.8 L951.7,340.7 L951.8,340.6 L952.0,340.4 L952.2,340.3 L952.3,340.2 L952.5,340.1 L952.7,339.9 L952.8,339.8 L953.0,339.7 L953.2,339.6 L953.3,339.5 L953.5,339.4 L953.7,339.3 L953.8,339.3 L954.0,339.2 L954.2,339.1 L954.3,339.0 L954.5,338.9 L954.7,338.9 L954.8,338.8 L955.0,338.7 L955.2,338.7 L955.3,338.6 L955.5,338.6 L955.7,338.5 L955.8,338.5 L956.0,338.4 L956.2,338.4 L956.3,338.4 L956.5,338.3 L956.7,338.3 L956.8,338.3 L957.0,338.2 L957.2,338.2 L957.3,338.2 L957.5,338.2 L957.7,338.2 L957.8,338.2 L958.0,338.2 L958.2,338.2 L958.3,338.2 L958.5,338.2 L958.7,338.2 L958.8,338.2 L959.0,338.2 L959.2,338.3 L959.3,338.3 L959.5,338.3 L959.7,338.3 L959.8,338.4 L960.0,338.4 L960.2,338.5 L960.3,338.5 L960.5,338.6 L960.7,338.6 L960.8,338.7 L961.0,338.7 L961.2,338.8 L961.3,338.8 L961.5,338.9 L961.7,339.0 L961.8,339.1 L962.0,339.1 L962.2,339.2 L962.3,339.3 L962.5,339.4 L962.7,339.5 L962.8,339.6 L963.0,339.7 L963.2,339.8 L963.3,339.9 L963.5,340.0 L963.7,340.1 L963.8,340.2 L964.0,340.4 L964.2,340.5 L964.3,340.6 L964.5,340.8 L964.7,340.9 L964.8,341.0 L965.0,341.2 L965.2,341.3 L965.3,341.5 L965.5,341.7 L965.7,341.8 L965.8,342.0 L966.0,342.2 L966.2,342.4 L966.3,342.5 L966.5,342.7 L966.7,342.9 L966.8,343.1 L967.0,343.3 L967.2,343.5 L967.3,343.7 L967.5,344.0 L967.7,344.2 L967.8,344.4 L968.0,344.6 L968.2,344.9 L968.4,345.1 L968.5,345.4 L968.7,345.6 L968.9,345.9 L969.0,346.2 L969.2,346.5 L969.4,346.7 L969.5,347.0 L969.7,347.3 L969.9,347.6 L970.0,348.0 L970.2,348.3 L970.4,348.6 L970.5,348.9 L970.7,349.3 L970.9,349.6 L971.0,350.0 L971.2,350.4 L971.4,350.8 L971.5,351.1 L971.7,351.5 L971.9,352.0 L972.0,352.4 L972.2,352.8 L972.4,353.3 L972.5,353.7 L972.7,354.2 L972.9,354.7 L973.0,355.2 L973.2,355.7 L973.4,356.2 L973.5,356.7 L973.7,357.3 L973.9,357.9 L974.0,358.5 L974.2,359.1 L974.4,359.7 L974.5,360.4 L974.7,361.1 L974.9,361.8 L975.0,362.5 L975.2,363.3 L975.4,364.0 L975.5,364.9 L975.7,365.7 L975.9,366.6 L976.0,367.5 L976.2,368.5 L976.4,369.5 L976.5,370.6 L976.7,371.7 L976.9,372.9 L977.0,374.2 L977.2,375.5 L977.4,376.9 L977.5,378.5 L977.7,380.1 L977.9,381.9 L978.0,383.8 L978.2,385.9 L978.4,388.3 L978.5,390.9 L978.7,393.9 L978.9,397.3 L979.0,397.5 L979.2,397.5 L979.4,397.5 L979.5,397.5 L979.7,397.5 L979.9,397.5 L980.0,397.5 L980.2,397.5 L980.4,397.5 L980.5,397.5 L980.7,397.5 L980.9,397.5 L981.0,394.2 L981.2,391.2 L981.4,388.6 L981.5,386.2 L981.7,384.1 L981.9,382.2 L982.0,380.4 L982.2,378.8 L982.4,377.2 L982.5,375.8 L982.7,374.5 L982.9,373.2 L983.0,372.0 L983.2,370.9 L983.4,369.8 L983.5,368.8 L983.7,367.9 L983.9,366.9 L984.0,366.1 L984.2,365.2 L984.4,364.4 L984.5,363.6 L984.7,362.9 L984.9,362.1 L985.0,361.5 L985.2,360.8 L985.4,360.1 L985.6,359.5 L985.7,358.9 L985.9,358.3 L986.1,357.7 L986.2,357.2 L986.4,356.7 L986.6,356.1 L986.7,355.6 L986.9,355.2 L987.1,354.7 L987.2,354.2 L987.4,353.8 L987.6,353.3 L987.7,352.9 L987.9,352.5 L988.1,352.1 L988.2,351.7 L988.4,351.3 L988.6,351.0 L988.7,350.6 L988.9,350.2 L989.1,349.9 L989.2,349.6 L989.4,349.2 L989.6,348.9 L989.7,348.6 L989.9,348.3 L990.1,348.0 L990.2,347.7 L990.4,347.4 L990.6,347.2 L990.7,346.9 L990.9,346.6 L991.1,346.4 L991.2,346.1 L991.4,345.9 L991.6,345.7 L991.7,345.4 L991.9,345.2 L992.1,345.0 L992.2,344.8 L992.4,344.6 L992.6,344.4 L992.7,344.2 L992.9,344.0 L993.1,343.8 L993.2,343.6 L993.4,343.4 L993.6,343.2 L993.7,343.1 L993.9,342.9 L994.1,342.7 L994.2,342.6 L994.4,342.4 L994.6,342.3 L994.7,342.2 L994.9,342.0 L995.1,341.9 L995.2,341.8 L995.4,341.6 L995.6,341.5 L995.7,341.4 L995.9,341.3 L996.1,341.2 L996.2,341.1 L996.4,341.0 L996.6,340.9 L996.7,340.8 L996.9,340.7 L997.1,340.6 L997.2,340.5 L997.4,340.4 L997.6,340.4 L997.7,340.3 L997.9,340.2 L998.1,340.2 L998.2,340.1 L998.4,340.0 L998.6,340.0 L998.7,339.9 L998.9,339.9 L999.1,339.8 L999.2,339.8 L999.4,339.8 L999.6,339.7 L999.7,339.7 L999.9,339.7 L1000.1,339.6 L1000.2,339.6 L1000.4,339.6 L1000.6,339.6 L1000.7,339.6 L1000.9,339.6 L1001.1,339.6 L1001.2,339.6 L1001.4,339.6 L1001.6,339.6 L1001.7,339.6 L1001.9,339.6 L1002.1,339.6 L1002.3,339.6 L1002.4,339.7 L1002.6,339.7 L1002.8,339.7 L1002.9,339.7 L1003.1,339.8 L1003.3,339.8 L1003.4,339.9 L1003.6,339.9 L1003.8,340.0 L1003.9,340.0 L1004.1,340.1 L1004.3,340.1 L1004.4,340.2 L1004.6,340.3 L1004.8,340.3 L1004.9,340.4 L1005.1,340.5 L1005.3,340.6 L1005.4,340.6 L1005.6,340.7 L1005.8,340.8 L1005.9,340.9 L1006.1,341.0 L1006.3,341.1 L1006.4,341.2 L1006.6,341.3 L1006.8,341.5 L1006.9,341.6 L1007.1,341.7 L1007.3,341.8 L1007.4,342.0 L1007.6,342.1 L1007.8,342.2 L1007.9,342.4 L1008.1,342.5 L1008.3,342.7 L1008.4,342.8 L1008.6,343.0 L1008.8,343.1 L1008.9,343.3 L1009.1,343.5 L1009.3,343.7 L1009.4,343.8 L1009.6,344.0 L1009.8,344.2 L1009.9,344.4 L1010.1,344.6 L1010.3,344.8 L1010.4,345.0 L1010.6,345.3 L1010.8,345.5 L1010.9,345.7 L1011.1,345.9 L1011.3,346.2 L1011.4,346.4 L1011.6,346.7 L1011.8,346.9 L1011.9,347.2 L1012.1,347.5 L1012.3,347.7 L1012.4,348.0 L1012.6,348.3 L1012.8,348.6 L1012.9,348.9 L1013.1,349.2 L1013.3,349.6 L1013.4,349.9 L1013.6,350.2 L1013.8,350.6 L1013.9,350.9 L1014.1,351.3 L1014.3,351.7 L1014.4,352.0 L1014.6,352.4 L1014.8,352.8 L1014.9,353.2 L1015.1,353.7 L1015.3,354.1 L1015.4,354.5 L1015.6,355.0 L1015.8,355.5 L1015.9,355.9 L1016.1,356.4 L1016.3,357.0 L1016.4,357.5 L1016.6,358.0 L1016.8,358.6 L1016.9,359.2 L1017.1,359.8 L1017.3,360.4 L1017.4,361.0 L1017.6,361.7 L1017.8,362.3 L1017.9,363.0 L1018.1,363.8 L1018.3,364.5 L1018.4,365.3 L1018.6,366.1 L1018.8,367.0 L1018.9,367.9 L1019.1,368.8 L1019.3,369.8 L1019.5,370.8 L1019.6,371.9 L1019.8,373.0 L1020.0,374.2 L1020.1,375.5 L1020.3,376.8 L1020.5,378.3 L1020.6,379.8 L1020.8,381.5 L1021.0,383.3 L1021.1,385.2 L1021.3,387.4 L1021.5,389.7 L1021.6,392.4 L1021.8,395.4 L1022.0,397.5 L1022.1,397.5 L1022.3,397.5 L1022.5,397.5 L1022.6,397.5 L1022.8,397.5 L1023.0,397.5 L1023.1,397.5 L1023.3,397.5 L1023.5,397.5 L1023.6,397.5 L1023.8,397.5 L1024.0,397.5 L1024.1,395.0 L1024.3,392.1 L1024.5,389.5 L1024.6,387.1 L1024.8,385.0 L1025.0,383.1 L1025.1,381.3 L1025.3,379.7 L1025.5,378.2 L1025.6,376.8 L1025.8,375.5 L1026.0,374.2 L1026.1,373.0 L1026.3,371.9 L1026.5,370.8 L1026.6,369.8 L1026.8,368.9 L1027.0,368.0 L1027.1,367.1 L1027.3,366.2 L1027.5,365.4 L1027.6,364.6 L1027.8,363.9 L1028.0,363.2 L1028.1,362.5 L1028.3,361.8 L1028.5,361.2 L1028.6,360.5 L1028.8,359.9 L1029.0,359.4 L1029.1,358.8 L1029.3,358.2 L1029.5,357.7 L1029.6,357.2 L1029.8,356.7 L1030.0,356.2 L1030.1,355.7 L1030.3,355.3 L1030.5,354.8 L1030.6,354.4 L1030.8,354.0 L1031.0,353.5 L1031.1,353.1 L1031.3,352.7 L1031.5,352.4 L1031.6,352.0 L1031.8,351.6 L1032.0,351.3 L1032.1,350.9 L1032.3,350.6 L1032.5,350.3 L1032.6,350.0 L1032.8,349.6 L1033.0,349.3 L1033.1,349.0 L1033.3,348.8 L1033.5,348.5 L1033.6,348.2 L1033.8,347.9 L1034.0,347.7 L1034.1,347.4 L1034.3,347.2 L1034.5,346.9 L1034.6,346.7 L1034.8,346.4 L1035.0,346.2 L1035.1,346.0 L1035.3,345.8 L1035.5,345.6 L1035.6,345.4 L1035.8,345.2 L1036.0,345.0 L1036.1,344.8 L1036.3,344.6 L1036.5,344.4 L1036.7,344.3 L1036.8,344.1 L1037.0,343.9 L1037.2,343.8 L1037.3,343.6 L1037.5,343.5 L1037.7,343.3 L1037.8,343.2 L1038.0,343.0 L1038.2,342.9 L1038.3,342.8 L1038.5,342.6 L1038.7,342.5 L1038.8,342.4 L1039.0,342.3 L1039.2,342.2 L1039.3,342.1 L1039.5,342.0 L1039.7,341.9 L1039.8,341.8 L1040.0,341.7 L1040.2,341.6 L1040.3,341.5 L1040.5,341.4 L1040.7,341.4 L1040.8,341.3 L1041.0,341.2 L1041.2,341.1 L1041.3,341.1 L1041.5,341.0 L1041.7,341.0 L1041.8,340.9 L1042.0,340.9 L1042.2,340.8 L1042.3,340.8 L1042.5,340.7 L1042.7,340.7 L1042.8,340.7 L1043.0,340.7 L1043.2,340.6 L1043.3,340.6 L1043.5,340.6 L1043.7,340.6 L1043.8,340.6 L1044.0,340.6 L1044.2,340.5 L1044.3,340.5 L1044.5,340.5 L1044.7,340.6 L1044.8,340.6 L1045.0,340.6 L1045.2,340.6 L1045.3,340.6 L1045.5,340.6 L1045.7,340.7 L1045.8,340.7 L1046.0,340.7 L1046.2,340.8 L1046.3,340.8 L1046.5,340.8 L1046.7,340.9 L1046.8,340.9 L1047.0,341.0 L1047.2,341.0 L1047.3,341.1 L1047.5,341.2 L1047.7,341.2 L1047.8,341.3 L1048.0,341.4 L1048.2,341.4 L1048.3,341.5 L1048.5,341.6 L1048.7,341.7 L1048.8,341.8 L1049.0,341.9 L1049.2,342.0 L1049.3,342.1 L1049.5,342.2 L1049.7,342.3 L1049.8,342.4 L1050.0,342.5 L1050.2,342.7 L1050.3,342.8 L1050.5,342.9 L1050.7,343.0 L1050.8,343.2 L1051.0,343.3 L1051.2,343.5 L1051.3,343.6 L1051.5,343.8 L1051.7,343.9 L1051.8,344.1 L1052.0,344.3 L1052.2,344.4 L1052.3,344.6 L1052.5,344.8 L1052.7,345.0 L1052.8,345.2 L1053.0,345.4 L1053.2,345.6 L1053.3,345.8 L1053.5,346.0 L1053.7,346.2 L1053.9,346.4 L1054.0,346.7 L1054.2,346.9 L1054.4,347.1 L1054.5,347.4 L1054.7,347.6 L1054.9,347.9 L1055.0,348.2 L1055.2,348.4 L1055.4,348.7 L1055.5,349.0 L1055.7,349.3 L1055.9,349.6 L1056.0,349.9 L1056.2,350.2 L1056.4,350.5 L1056.5,350.8 L1056.7,351.2 L1056.9,351.5 L1057.0,351.9 L1057.2,352.2 L1057.4,352.6 L1057.5,353.0 L1057.7,353.4 L1057.9,353.8 L1058.0,354.2 L1058.2,354.6 L1058.4,355.1 L1058.5,355.5 L1058.7,356.0 L1058.9,356.4 L1059.0,356.9 L1059.2,357.4 L1059.4,357.9 L1059.5,358.5 L1059.7,359.0 L1059.9,359.6 L1060.0,360.2 L1060.2,360.8 L1060.4,361.4 L1060.5,362.0 L1060.7,362.7 L1060.9,363.4 L1061.0,364.1 L1061.2,364.8 L1061.4,365.6 L1061.5,366.4 L1061.7,367.2 L1061.9,368.1 L1062.0,369.0 L1062.2,369.9 L1062.4,370.9 L1062.5,371.9 L1062.7,373.0 L1062.9,374.2 L1063.0,375.4 L1063.2,376.7 L1063.4,378.1 L1063.5,379.5 L1063.7,381.1 L1063.9,382.8 L1064.0,384.6 L1064.2,386.6 L1064.4,388.8 L1064.5,391.3 L1064.7,394.0 L1064.9,397.2 L1065.0,397.5 L1065.2,397.5 L1065.4,397.5 L1065.5,397.5 L1065.7,397.5 L1065.9,397.5 L1066.0,397.5 L1066.2,397.5 L1066.4,397.5 L1066.5,397.5 L1066.7,397.5 L1066.9,397.5 L1067.0,397.5 L1067.2,394.8 L1067.4,392.0 L1067.5,389.5 L1067.7,387.2 L1067.9,385.2 L1068.0,383.3 L1068.2,381.6 L1068.4,380.0 L1068.5,378.5 L1068.7,377.1 L1068.9,375.8 L1069.0,374.6 L1069.2,373.4 L1069.4,372.3 L1069.5,371.3 L1069.7,370.3 L1069.9,369.3 L1070.0,368.4 L1070.2,367.5 L1070.4,366.7 L1070.5,365.9 L1070.7,365.1 L1070.9,364.4 L1071.1,363.7 L1071.2,363.0 L1071.4,362.3 L1071.6,361.7 L1071.7,361.1 L1071.9,360.5 L1072.1,359.9 L1072.2,359.3 L1072.4,358.8 L1072.6,358.2 L1072.7,357.7 L1072.9,357.2 L1073.1,356.8 L1073.2,356.3 L1073.4,355.8 L1073.6,355.4 L1073.7,354.9 L1073.9,354.5 L1074.1,354.1 L1074.2,353.7 L1074.4,353.3 L1074.6,352.9 L1074.7,352.6 L1074.9,352.2 L1075.1,351.9 L1075.2,351.5 L1075.4,351.2 L1075.6,350.9 L1075.7,350.5 L1075.9,350.2 L1076.1,349.9 L1076.2,349.6 L1076.4,349.3 L1076.6,349.1 L1076.7,348.8 L1076.9,348.5 L1077.1,348.3 L1077.2,348.0 L1077.4,347.7 L1077.6,347.5 L1077.7,347.3 L1077.9,347.0 L1078.1,346.8 L1078.2,346.6 L1078.4,346.4 L1078.6,346.2 L1078.7,346.0 L1078.9,345.8 L1079.1,345.6 L1079.2,345.4 L1079.4,345.2 L1079.6,345.0 L1079.7,344.8 L1079.9,344.7 L1080.1,344.5 L1080.2,344.4 L1080.4,344.2 L1080.6,344.0 L1080.7,343.9 L1080.9,343.8 L1081.1,343.6 L1081.2,343.5 L1081.4,343.4 L1081.6,343.2 L1081.7,343.1 L1081.9,343.0 L1082.1,342.9 L1082.2,342.8 L1082.4,342.7 L1082.6,342.6 L1082.7,342.5 L1082.9,342.4 L1083.1,342.3 L1083.2,342.2 L1083.4,342.1 L1083.6,342.0 L1083.7,341.9 L1083.9,341.9 L1084.1,341.8 L1084.2,341.7 L1084.4,341.7 L1084.6,341.6 L1084.7,341.6 L1084.9,341.5 L1085.1,341.5 L1085.2,341.4 L1085.4,341.4 L1085.6,341.3 L1085.7,341.3 L1085.9,341.3 L1086.1,341.2 L1086.2,341.2 L1086.4,341.2 L1086.6,341.2 L1086.7,341.2 L1086.9,341.1 L1087.1,341.1 L1087.2,341.1 L1087.4,341.1 L1087.6,341.1 L1087.8,341.1 L1087.9,341.1 L1088.1,341.2 L1088.3,341.2 L1088.4,341.2 L1088.6,341.2 L1088.8,341.2 L1088.9,341.3 L1089.1,341.3 L1089.3,341.3 L1089.4,341.4 L1089.6,341.4 L1089.8,341.5 L1089.9,341.5 L1090.1,341.6 L1090.3,341.6 L1090.4,341.7 L1090.6,341.7 L1090.8,341.8 L1090.9,341.9 L1091.1,341.9 L1091.3,342.0 L1091.4,342.1 L1091.6,342.2 L1091.8,342.3 L1091.9,342.4 L1092.1,342.5 L1092.3,342.6 L1092.4,342.7 L1092.6,342.8 L1092.8,342.9 L1092.9,343.0 L1093.1,343.1 L1093.3,343.2 L1093.4,343.4 L1093.6,343.5 L1093.8,343.6 L1093.9,343.8 L1094.1,343.9 L1094.3,344.0 L1094.4,344.2 L1094.6,344.3 L1094.8,344.5 L1094.9,344.7 L1095.1,344.8 L1095.3,345.0 L1095.4,345.2 L1095.6,345.4 L1095.8,345.6 L1095.9,345.8 L1096.1,346.0 L1096.3,346.2 L1096.4,346.4 L1096.6,346.6 L1096.8,346.8 L1096.9,347.0 L1097.1,347.2 L1097.3,347.5 L1097.4,347.7 L1097.6,348.0 L1097.8,348.2 L1097.9,348.5 L1098.1,348.7 L1098.3,349.0 L1098.4,349.3 L1098.6,349.6 L1098.8,349.9 L1098.9,350.2 L1099.1,350.5 L1099.3,350.8 L1099.4,351.1 L1099.6,351.4 L1099.8,351.8 L1099.9,352.1 L1100.1,352.5 L1100.3,352.9 L1100.4,353.2 L1100.6,353.6 L1100.8,354.0 L1100.9,354.4 L1101.1,354.8 L1101.3,355.3 L1101.4,355.7 L1101.6,356.1 L1101.8,356.6 L1101.9,357.1 L1102.1,357.6 L1102.3,358.1 L1102.4,358.6 L1102.6,359.1 L1102.8,359.7 L1102.9,360.2 L1103.1,360.8 L1103.3,361.4 L1103.4,362.1 L1103.6,362.7 L1103.8,363.4 L1103.9,364.1 L1104.1,364.8 L1104.3,365.5 L1104.4,366.3 L1104.6,367.1 L1104.8,368.0 L1105.0,368.9 L1105.1,369.8 L1105.3,370.7 L1105.5,371.7 L1105.6,372.8 L1105.8,373.9 L1106.0,375.1 L1106.1,376.3 L1106.3,377.6 L1106.5,379.1 L1106.6,380.6 L1106.8,382.2 L1107.0,383.9 L1107.1,385.8 L1107.3,387.9 L1107.5,390.2 L1107.6,392.7 L1107.8,395.6 L1108.0,397.5 L1108.1,397.5 L1108.3,397.5 L1108.5,397.5 L1108.6,397.5 L1108.8,397.5 L1109.0,397.5 L1109.1,397.5 L1109.3,397.5 L1109.5,397.5 L1109.6,397.5 L1109.8,397.5 L1110.0,397.5 L1110.1,397.1 L1110.3,394.0 L1110.5,391.3 L1110.6,388.9 L1110.8,386.7 L1111.0,384.8 L1111.1,382.9 L1111.3,381.3 L1111.5,379.7 L1111.6,378.3 L1111.8,376.9 L1112.0,375.6 L1112.1,374.4 L1112.3,373.3 L1112.5,372.2 L1112.6,371.2 L1112.8,370.2 L1113.0,369.3 L1113.1,368.4 L1113.3,367.5 L1113.5,366.7 L1113.6,365.9 L1113.8,365.2 L1114.0,364.4 L1114.1,363.7 L1114.3,363.1 L1114.5,362.4 L1114.6,361.8 L1114.8,361.2 L1115.0,360.6 L1115.1,360.0 L1115.3,359.4 L1115.5,358.9 L1115.6,358.4 L1115.8,357.8 L1116.0,357.4 L1116.1,356.9 L1116.3,356.4 L1116.5,356.0 L1116.6,355.5 L1116.8,355.1 L1117.0,354.7 L1117.1,354.3 L1117.3,353.9 L1117.5,353.5 L1117.6,353.1 L1117.8,352.7 L1118.0,352.4 L1118.1,352.0 L1118.3,351.7 L1118.5,351.3 L1118.6,351.0 L1118.8,350.7 L1119.0,350.4 L1119.1,350.1 L1119.3,349.8 L1119.5,349.5 L1119.6,349.2 L1119.8,349.0 L1120.0,348.7 L1120.1,348.4 L1120.3,348.2 L1120.5,347.9 L1120.6,347.7 L1120.8,347.5 L1121.0,347.2 L1121.1,347.0 L1121.3,346.8 L1121.5,346.6 L1121.6,346.4 L1121.8,346.2 L1122.0,346.0 L1122.2,345.8 L1122.3,345.6 L1122.5,345.4 L1122.7,345.2 L1122.8,345.0 L1123.0,344.9 L1123.2,344.7 L1123.3,344.5 L1123.5,344.4 L1123.7,344.2 L1123.8,344.1 L1124.0,344.0 L1124.2,343.8 L1124.3,343.7 L1124.5,343.5 L1124.7,343.4 L1124.8,343.3 L1125.0,343.2 L1125.2,343.1 L1125.3,343.0 L1125.5,342.9 L1125.7,342.8 L1125.8,342.7 L1126.0,342.6 L1126.2,342.5 L1126.3,342.4 L1126.5,342.3 L1126.7,342.2 L1126.8,342.1 L1127.0,342.1 L1127.2,342.0 L1127.3,341.9 L1127.5,341.9 L1127.7,341.8 L1127.8,341.8 L1128.0,341.7 L1128.2,341.7 L1128.3,341.6 L1128.5,341.6 L1128.7,341.5 L1128.8,341.5 L1129.0,341.5 L1129.2,341.4 L1129.3,341.4 L1129.5,341.4 L1129.7,341.4 L1129.8,341.3 L1130.0,341.3 L1130.2,341.3 L1130.3,341.3" fill="none" stroke="#0072bd" stroke-width="1.1" stroke-linejoin="round" clip-path="url(#axclip)"/>
  <g shape-rendering="crispEdges" stroke="#262626" stroke-width="1" fill="none">
    <rect x="446.5" y="151.5" width="684" height="226"/>
    <path d="M531.5 377 V371 M531.5 152 V158"/><path d="M617.5 377 V371 M617.5 152 V158"/><path d="M702.5 377 V371 M702.5 152 V158"/><path d="M788.5 377 V371 M788.5 152 V158"/><path d="M873.5 377 V371 M873.5 152 V158"/><path d="M959.5 377 V371 M959.5 152 V158"/><path d="M1044.5 377 V371 M1044.5 152 V158"/><path d="M447 162.5 H453 M1130 162.5 H1124"/><path d="M447 213.5 H453 M1130 213.5 H1124"/><path d="M447 265.5 H453 M1130 265.5 H1124"/><path d="M447 316.5 H453 M1130 316.5 H1124"/><path d="M447 368.5 H453 M1130 368.5 H1124"/>
  </g>
  <g font-size="12" fill="#262626">
    <text x="446.2" y="397" text-anchor="middle">0</text><text x="531.2" y="397" text-anchor="middle">1</text><text x="617.2" y="397" text-anchor="middle">2</text><text x="702.2" y="397" text-anchor="middle">3</text><text x="788.2" y="397" text-anchor="middle">4</text><text x="873.2" y="397" text-anchor="middle">5</text><text x="959.2" y="397" text-anchor="middle">6</text><text x="1044.2" y="397" text-anchor="middle">7</text><text x="440" y="167.7" text-anchor="end">0</text><text x="440" y="218.7" text-anchor="end">-20</text><text x="440" y="270.7" text-anchor="end">-40</text><text x="440" y="321.7" text-anchor="end">-60</text><text x="440" y="373.7" text-anchor="end">-80</text>
  </g>
  <text x="788.5" y="417" font-size="14.67" letter-spacing="-0.09" text-anchor="middle" fill="#262626">Frequency (MHz)</text>
  <text transform="translate(412.8,264.5) rotate(-90)" font-size="14.67" text-anchor="middle" fill="#262626">Magnitude (dB)</text>
  <!-- legend -->
  <rect x="845.5" y="155.5" width="229" height="36" fill="#fff" stroke="#262626" shape-rendering="crispEdges"/>
  <path d="M849.5 165.5 H889.5" stroke="#0072bd" stroke-width="1.2"/>
  <path d="M849.5 181.9 H889.5" stroke="#0072bd" stroke-width="1.2" stroke-dasharray="8 2.5 3 2.5"/>
  <text x="892.5" y="170" font-size="12" fill="#1a1a1a">Lowpass FIR Window: Quantized</text>
  <text x="892.5" y="186.5" font-size="12" fill="#1a1a1a">Lowpass FIR Window: Reference</text>
</svg>

<!--LOWER-->
<div class="a" style="left:54px;top:457px;width:1202px;height:2px;background:#555"></div>
<div class="a" style="left:54px;top:457px;width:2px;height:335px;background:#555"></div>
<div class="a" style="left:1254px;top:459px;width:2px;height:334px;background:#fff"></div>
<div class="a" style="left:56px;top:791px;width:1200px;height:2px;background:#fff"></div>
<div class="grp" style="left:63px;top:475px;width:285px;height:276px"></div>
<div class="a" style="left:79px;top:474px;width:131px;height:3px;background:#f0f0f0"></div>
<div class="t" style="left:106px;top:464px">Response Type</div>
<div class="radio on" style="left:80px;top:493px"></div>
<div class="combo" style="left:115px;top:487px;width:216px;height:23px"><span style="letter-spacing:0.25px">Lowpass</span><i><svg width="9" height="6" viewBox="0 0 9 6"><path d="M0.5 0.7 L4.5 4.7 L8.5 0.7" fill="none" stroke="#444" stroke-width="1.2"/></svg></i></div>
<div class="radio" style="left:80px;top:523px"></div>
<div class="combo" style="left:115px;top:517px;width:216px;height:23px"><span style="letter-spacing:-0.2px">Highpass</span><i><svg width="9" height="6" viewBox="0 0 9 6"><path d="M0.5 0.7 L4.5 4.7 L8.5 0.7" fill="none" stroke="#444" stroke-width="1.2"/></svg></i></div>
<div class="radio" style="left:80px;top:552px"></div>
<div class="t" style="left:97px;top:552px">Bandpass</div>
<div class="radio" style="left:80px;top:582px"></div>
<div class="t" style="left:97px;top:582px">Bandstop</div>
<div class="radio" style="left:80px;top:611px"></div>
<div class="combo" style="left:115px;top:605px;width:216px;height:23px"><span>Differentiator</span><i><svg width="9" height="6" viewBox="0 0 9 6"><path d="M0.5 0.7 L4.5 4.7 L8.5 0.7" fill="none" stroke="#444" stroke-width="1.2"/></svg></i></div>
<div class="a" style="left:63px;top:649px;width:285px;height:1px;background:#000"></div>
<div class="a" style="left:79px;top:648px;width:123px;height:3px;background:#f0f0f0"></div>
<div class="t" style="left:105px;top:637px;letter-spacing:-0.26px">Design Method</div>
<div class="radio" style="left:80px;top:672px"></div>
<div class="t" style="left:97px;top:672px;letter-spacing:-0.7px">IIR</div>
<div class="combo" style="left:146px;top:666px;width:185px;height:23px"><span>Butterworth</span><i><svg width="9" height="6" viewBox="0 0 9 6"><path d="M0.5 0.7 L4.5 4.7 L8.5 0.7" fill="none" stroke="#444" stroke-width="1.2"/></svg></i></div>
<div class="radio on" style="left:80px;top:715px"></div>
<div class="t" style="left:97px;top:715px;letter-spacing:-0.55px">FIR</div>
<div class="combo" style="left:146px;top:709px;width:185px;height:23px"><span>Window</span><i><svg width="9" height="6" viewBox="0 0 9 6"><path d="M0.5 0.7 L4.5 4.7 L8.5 0.7" fill="none" stroke="#444" stroke-width="1.2"/></svg></i></div>
<div class="grp" style="left:355px;top:475px;width:291px;height:99px"></div>
<div class="a" style="left:371px;top:474px;width:95px;height:3px;background:#f0f0f0"></div>
<div class="t" style="left:391px;top:464px;letter-spacing:-0.15px">Filter Order</div>
<div class="radio on" style="left:372px;top:498px"></div>
<div class="t" style="left:389px;top:498px">Specify order:</div>
<div class="edit" style="left:525px;top:492px;width:65px;height:24px"><span>30</span></div>
<div class="radio dis" style="left:372px;top:540px"></div>
<div class="t" style="left:389px;top:540px;color:#838383;letter-spacing:-0.4px">Minimum order</div>
<div class="grp" style="left:355px;top:592px;width:291px;height:158px"></div>
<div class="a" style="left:371px;top:591px;width:67px;height:3px;background:#f0f0f0"></div>
<div class="t" style="left:386px;top:581px;letter-spacing:-0.2px">Options</div>
<div class="a" style="left:372px;top:603px;width:13px;height:13px;background:#fff;border:1px solid #333"><svg class="a" style="left:0;top:0" width="11" height="11" viewBox="0 0 11 11"><path d="M1.5 5.5 L4.3 8.3 L9.7 2.5" fill="none" stroke="#333" stroke-width="1.2"/></svg></div>
<div class="t" style="left:389px;top:603px;letter-spacing:-0.17px">Scale Passband</div>
<div class="t" style="left:372px;top:634px">Window:</div>
<div class="combo" style="left:478px;top:629px;width:150px;height:23px"><span>Hamming</span><i><svg width="9" height="6" viewBox="0 0 9 6"><path d="M0.5 0.7 L4.5 4.7 L8.5 0.7" fill="none" stroke="#444" stroke-width="1.2"/></svg></i></div>
<div class="btn" style="left:461px;top:721px;width:80px;height:24px;line-height:22px;font-size:11.6px">View</div>
<div class="grp" style="left:655px;top:475px;width:291px;height:275px"></div>
<div class="a" style="left:671px;top:474px;width:208px;height:3px;background:#f0f0f0"></div>
<div class="t" style="left:713px;top:464px">Frequency Specifications</div>
<div class="t" style="left:672px;top:493px;letter-spacing:-0.28px">Units:</div>
<div class="combo" style="left:730px;top:488px;width:188px;height:23px"><span style="letter-spacing:-0.56px">MHz</span><i><svg width="9" height="6" viewBox="0 0 9 6"><path d="M0.5 0.7 L4.5 4.7 L8.5 0.7" fill="none" stroke="#444" stroke-width="1.2"/></svg></i></div>
<div class="t" style="left:689px;top:535px;letter-spacing:-0.35px">Fs:</div>
<div class="edit" style="left:740px;top:530px;width:178px;height:24px"><span>16</span></div>
<div class="t" style="left:689px;top:581px;letter-spacing:-0.35px">Fc:</div>
<div class="edit" style="left:768px;top:576px;width:150px;height:24px"><span>1</span></div>
<div class="grp" style="left:955px;top:475px;width:291px;height:275px"></div>
<div class="a" style="left:972px;top:474px;width:203px;height:3px;background:#f0f0f0"></div>
<div class="t" style="left:1013px;top:464px;letter-spacing:-0.14px">Magnitude Specifications</div>
<div class="t" style="left:973px;top:536px">The attenuation at cutoff frequencies is fixed at 6 dB</div>
<div class="t" style="left:973px;top:550px">(half the passband gain)</div>
<div class="btn" style="left:596px;top:759px;width:134px;height:24px;line-height:22px;background:#ccc;border-color:#bfbfbf;color:#838383;letter-spacing:-0.25px">Design Filter</div>
<!--STATUS-->
<div class="a" style="left:3px;top:794px;width:1254px;height:27px;background:#fff;border:1px solid #a0a0a0"></div>
<div class="a" style="left:6px;top:797px;font-size:17px;line-height:20px;white-space:nowrap">Ready</div>

</body></html>
